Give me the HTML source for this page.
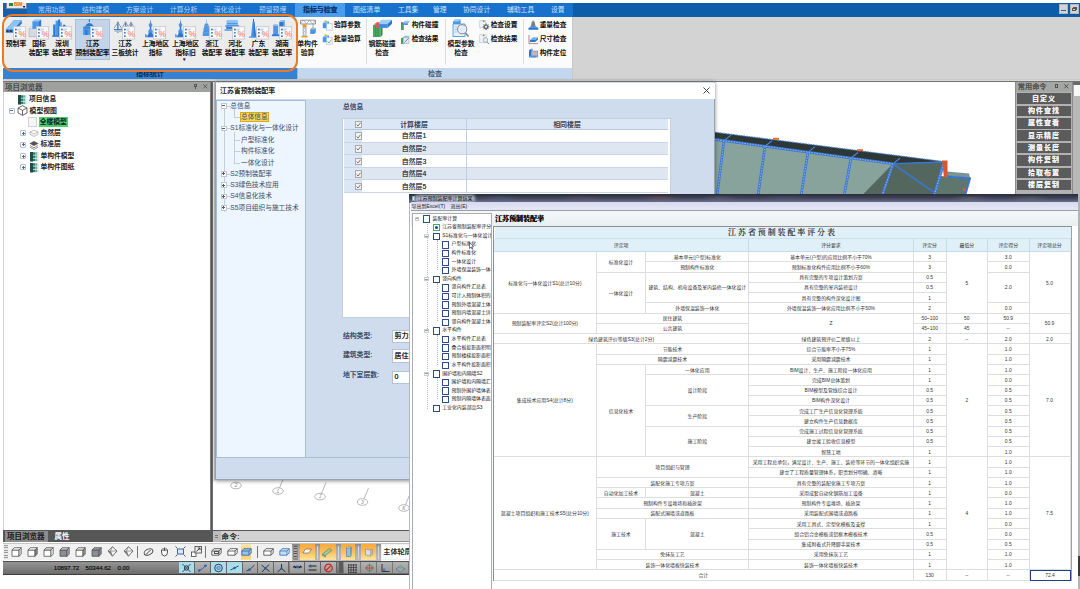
<!DOCTYPE html>
<html lang="zh"><head><meta charset="utf-8"><title>BIM</title><style>
html,body{margin:0;padding:0;background:#fff;}
body{width:1080px;height:589px;position:relative;overflow:hidden;font-family:"Liberation Sans","Noto Sans CJK SC",sans-serif;}
div{position:absolute;box-sizing:border-box;}
.t{white-space:nowrap;line-height:1.2;text-shadow:0 0 .3px currentColor;}
svg{position:absolute;overflow:visible;}
table{border-collapse:collapse;}
.c{border-right:1px solid #dcdee0;border-bottom:1px solid #dcdee0;padding-top:.6px;text-align:center;white-space:nowrap;color:#333;overflow:hidden;background:#fff;}
</style></head><body>
<div style="left:3.3px;top:2.6px;width:1076.7px;height:14.2px;background:#0d5ca9;"></div><div style="left:27px;top:2.6px;width:546px;height:14.2px;background:#1672cc;"></div><div style="left:3.3px;top:2.6px;width:24px;height:14.2px;background:#1060b6;"></div><div style="left:5.9px;top:2.6px;width:20.8px;height:6.9px;background:#e6e6e6;border:1px solid #8a8a8a;border-top:none;"></div><div style="left:8.5px;top:3.1px;width:4.5px;height:3.2px;background:#1f8a4c;"></div><div class="t" style="left:14px;top:2.4px;font-size:4.6px;color:#e8901a;font-weight:bold;">BIM</div><div class="t" style="left:23.3px;top:5.2px;font-size:4px;color:#111;">▾</div><div class="t" style="left:38px;top:6.4px;font-size:6.8px;color:#b6d5f7;text-shadow:none;">常用功能</div><div class="t" style="left:82px;top:6.4px;font-size:6.8px;color:#b6d5f7;text-shadow:none;">结构建模</div><div class="t" style="left:126px;top:6.4px;font-size:6.8px;color:#b6d5f7;text-shadow:none;">方案设计</div><div class="t" style="left:170px;top:6.4px;font-size:6.8px;color:#b6d5f7;text-shadow:none;">计算分析</div><div class="t" style="left:214px;top:6.4px;font-size:6.8px;color:#b6d5f7;text-shadow:none;">深化设计</div><div class="t" style="left:259px;top:6.4px;font-size:6.8px;color:#b6d5f7;text-shadow:none;">预留预埋</div><div style="left:294.5px;top:2.6px;width:50.7px;height:14.2px;background:#4a9deb;"></div><div class="t" style="left:303px;top:6.4px;font-size:6.9px;color:#0e3a72;font-weight:bold;">指标与检查</div><div class="t" style="left:353px;top:6.4px;font-size:6.8px;color:#cfe3fa;text-shadow:none;">图纸清单</div><div class="t" style="left:398px;top:6.4px;font-size:6.8px;color:#cfe3fa;text-shadow:none;">工具集</div><div class="t" style="left:433px;top:6.4px;font-size:6.8px;color:#cfe3fa;text-shadow:none;">管理</div><div class="t" style="left:463px;top:6.4px;font-size:6.8px;color:#cfe3fa;text-shadow:none;">协同设计</div><div class="t" style="left:507px;top:6.4px;font-size:6.8px;color:#cfe3fa;text-shadow:none;">辅助工具</div><div class="t" style="left:551px;top:6.4px;font-size:6.8px;color:#cfe3fa;text-shadow:none;">设置</div><div style="left:1058.6px;top:4.2px;width:9.6px;height:10.2px;background:#d3d3d3;border:1px solid #b4b8bc;"></div><div style="left:1061.2px;top:10.3px;width:4.4px;height:1.2px;background:#555;"></div><div style="left:1069.5px;top:4.2px;width:9.6px;height:10.2px;background:#d3d3d3;border:1px solid #b4b8bc;"></div><div style="left:1072.6px;top:6.6px;width:4.2px;height:3.6px;border:.8px solid #555;border-top:1.4px solid #555;"></div><div style="left:1071.6px;top:7.8px;width:4.2px;height:3.6px;border:.8px solid #555;border-top:1.4px solid #555;background:#d3d3d3;"></div><div style="left:3.3px;top:16.8px;width:1076.7px;height:64px;background:#d3d3d3;"></div><div style="left:3.3px;top:16.8px;width:293.7px;height:51.2px;background:#ececec;"></div><div style="left:297px;top:16.8px;width:275px;height:51.2px;background:#fbfbfb;"></div><div style="left:3.3px;top:68px;width:293.7px;height:10.8px;background:#3482d4;"></div><div style="left:297px;top:68px;width:275.5px;height:10.8px;background:#c3d7ef;border-left:1px solid #9bb8dc;"></div><div style="left:572px;top:16.8px;width:1px;height:63px;background:#c8c8c8;"></div><div class="t" style="left:130px;top:70px;font-size:7px;color:#0b2a55;width:40px;text-align:center;">指标统计</div><div class="t" style="left:415px;top:70px;font-size:7px;color:#4a5a70;width:40px;text-align:center;">检查</div><div style="left:3.3px;top:78.8px;width:1076.7px;height:2.2px;background:linear-gradient(180deg,#c4c4c4,#dedede);"></div><div style="left:3.3px;top:80.8px;width:1076.7px;height:1.2px;background:#727272;"></div><div style="left:75px;top:19px;width:35px;height:41px;background:#c3d4e8;border:1px solid #a9c0dc;"></div><svg style="left:5px;top:18.5px" width="22" height="20.9" viewBox="0 0 20 19"><path d="M0.8 9.5 L8 1.2 H15.2 L15.2 4 L8 12.5 H0.8 Z" fill="#2f78cf"/><path d="M0.8 9.5 L8 1.2 H15.2 L8 9.5 Z" fill="#8cc4f6"/><rect x="1.5" y="10.2" width="1.6" height="1.6" fill="#234"/><rect x="4.5" y="10.2" width="1.6" height="1.6" fill="#234"/><rect x="7.6" y="7" width="11.2" height="11.2" fill="#f7f9fc" stroke="#c2c4c8" stroke-width=".7"/><circle cx="9.9" cy="9.6" r=".85" fill="#2f6fc8"/><circle cx="9.9" cy="12.6" r=".85" fill="#2f6fc8"/><circle cx="9.9" cy="15.6" r=".85" fill="#2f6fc8"/><path d="M11.3 9.2 H14.6 M11.3 10.2 H13.6" stroke="#a4c6f0" stroke-width=".7"/><text x="12.2" y="16.8" font-size="7.8" font-weight="bold" fill="#f4978a" font-family="Liberation Sans,sans-serif">%</text></svg><div class="t" style="left:-14px;top:39.8px;font-size:6.8px;color:#111;width:60px;text-align:center;">预制率</div><svg style="left:28px;top:18.5px" width="22" height="20.9" viewBox="0 0 20 19"><path d="M1 8.5 H9 V16 H1 Z" fill="#d5dae2" stroke="#9aa2ae" stroke-width=".5"/><path d="M1 8.5 L3 6.8 H11 L9 8.5" fill="#eef0f4" stroke="#9aa2ae" stroke-width=".4"/><path d="M4 2 H10 V9 H4 Z" fill="#4a97e8"/><path d="M4 2 L6 0.5 H12 L10 2 Z" fill="#8cc4f6"/><path d="M10 2 L12 0.5 V7.5 L10 9 Z" fill="#2f78cf"/><rect x="7.6" y="7" width="11.2" height="11.2" fill="#f7f9fc" stroke="#c2c4c8" stroke-width=".7"/><circle cx="9.9" cy="9.6" r=".85" fill="#2f6fc8"/><circle cx="9.9" cy="12.6" r=".85" fill="#2f6fc8"/><circle cx="9.9" cy="15.6" r=".85" fill="#2f6fc8"/><path d="M11.3 9.2 H14.6 M11.3 10.2 H13.6" stroke="#a4c6f0" stroke-width=".7"/><text x="12.2" y="16.8" font-size="7.8" font-weight="bold" fill="#f4978a" font-family="Liberation Sans,sans-serif">%</text></svg><div class="t" style="left:9px;top:39.8px;font-size:6.8px;color:#111;width:60px;text-align:center;">国标</div><div class="t" style="left:9px;top:49px;font-size:6.8px;color:#111;width:60px;text-align:center;">装配率</div><svg style="left:51px;top:18.5px" width="22" height="20.9" viewBox="0 0 20 19"><rect x="2" y="5" width="2.2" height="10.5" fill="#2f78cf"/><rect x="4.2" y="1.5" width="2.2" height="14" fill="#4a97e8"/><rect x="6.4" y="0.5" width="2" height="15" fill="#2f78cf"/><rect x="8.4" y="3" width="1.4" height="12.5" fill="#4a97e8"/><rect x="1" y="15" width="10" height="1.2" fill="#2f78cf"/><circle cx="12" cy="6.5" r="1.4" fill="#2f78cf"/><rect x="7.6" y="7" width="11.2" height="11.2" fill="#f7f9fc" stroke="#c2c4c8" stroke-width=".7"/><circle cx="9.9" cy="9.6" r=".85" fill="#2f6fc8"/><circle cx="9.9" cy="12.6" r=".85" fill="#2f6fc8"/><circle cx="9.9" cy="15.6" r=".85" fill="#2f6fc8"/><path d="M11.3 9.2 H14.6 M11.3 10.2 H13.6" stroke="#a4c6f0" stroke-width=".7"/><text x="12.2" y="16.8" font-size="7.8" font-weight="bold" fill="#f4978a" font-family="Liberation Sans,sans-serif">%</text></svg><div class="t" style="left:32px;top:39.8px;font-size:6.8px;color:#111;width:60px;text-align:center;">深圳</div><div class="t" style="left:32px;top:49px;font-size:6.8px;color:#111;width:60px;text-align:center;">装配率</div><svg style="left:81.5px;top:18.5px" width="22" height="20.9" viewBox="0 0 20 19"><path d="M1 14.5 V6.8 H12.5 V14.5 Z" fill="#4a97e8"/><path d="M2.5 6.8 Q6.7 0.5 11 6.8 Z" fill="#2f78cf"/><rect x="6.2" y="0.2" width="1" height="2.6" fill="#2f78cf"/><path d="M3 14.5 V10.5 Q4 9 5 10.5 V14.5 Z" fill="#2f78cf"/><path d="M2.5 8 H11" stroke="#2f78cf" stroke-width=".9"/><rect x="7.6" y="7" width="11.2" height="11.2" fill="#f7f9fc" stroke="#c2c4c8" stroke-width=".7"/><circle cx="9.9" cy="9.6" r=".85" fill="#2f6fc8"/><circle cx="9.9" cy="12.6" r=".85" fill="#2f6fc8"/><circle cx="9.9" cy="15.6" r=".85" fill="#2f6fc8"/><path d="M11.3 9.2 H14.6 M11.3 10.2 H13.6" stroke="#a4c6f0" stroke-width=".7"/><text x="12.2" y="16.8" font-size="7.8" font-weight="bold" fill="#f4978a" font-family="Liberation Sans,sans-serif">%</text></svg><div class="t" style="left:62.5px;top:39.8px;font-size:6.8px;color:#111;width:60px;text-align:center;">江苏</div><div class="t" style="left:62.5px;top:49px;font-size:6.8px;color:#111;width:60px;text-align:center;">预制装配率</div><svg style="left:114px;top:18.5px" width="22" height="20.9" viewBox="0 0 20 19"><path d="M3.5 2.5 V12.5 M10.5 2.5 V12.5 M15.5 3 V10" stroke="#3f7fd0" stroke-width="1.3"/><path d="M0 9.6 H17" stroke="#3f7fd0" stroke-width="1"/><path d="M0 8.5 L3.5 3 L7 8.5 L10.5 3 L13 7 L15.5 3.2 L18 7" stroke="#8a8f9a" stroke-width=".8" fill="none"/><path d="M0.5 11 H9" stroke="#b8bcc4" stroke-width="1.6"/><rect x="7.6" y="7" width="11.2" height="11.2" fill="#f7f9fc" stroke="#c2c4c8" stroke-width=".7"/><circle cx="9.9" cy="9.6" r=".85" fill="#2f6fc8"/><circle cx="9.9" cy="12.6" r=".85" fill="#2f6fc8"/><circle cx="9.9" cy="15.6" r=".85" fill="#2f6fc8"/><path d="M11.3 9.2 H14.6 M11.3 10.2 H13.6" stroke="#a4c6f0" stroke-width=".7"/><text x="12.2" y="16.8" font-size="7.8" font-weight="bold" fill="#f4978a" font-family="Liberation Sans,sans-serif">%</text></svg><div class="t" style="left:95px;top:39.8px;font-size:6.8px;color:#111;width:60px;text-align:center;">江苏</div><div class="t" style="left:95px;top:49px;font-size:6.8px;color:#111;width:60px;text-align:center;">三板统计</div><svg style="left:144.5px;top:18.5px" width="22" height="20.9" viewBox="0 0 20 19"><path d="M5 0 L5.5 4 L4.5 4 Z" fill="#2f78cf"/><circle cx="5" cy="5.4" r="1.7" fill="#4a97e8"/><rect x="4.3" y="6.5" width="1.4" height="4" fill="#2f78cf"/><circle cx="5" cy="11.5" r="2.1" fill="#4a97e8"/><path d="M3.6 12.5 L1.5 16.5 H8.5 L6.4 12.5 Z" fill="#2f78cf"/><path d="M0.3 16.5 V13.5 L1.5 14.5 V16.5 Z M9.7 16.5 V13.5 L8.5 14.5 V16.5 Z" fill="#2f78cf"/><rect x="7.6" y="7" width="11.2" height="11.2" fill="#f7f9fc" stroke="#c2c4c8" stroke-width=".7"/><circle cx="9.9" cy="9.6" r=".85" fill="#2f6fc8"/><circle cx="9.9" cy="12.6" r=".85" fill="#2f6fc8"/><circle cx="9.9" cy="15.6" r=".85" fill="#2f6fc8"/><path d="M11.3 9.2 H14.6 M11.3 10.2 H13.6" stroke="#a4c6f0" stroke-width=".7"/><text x="12.2" y="16.8" font-size="7.8" font-weight="bold" fill="#f4978a" font-family="Liberation Sans,sans-serif">%</text></svg><div class="t" style="left:125.5px;top:39.8px;font-size:6.8px;color:#111;width:60px;text-align:center;">上海地区</div><div class="t" style="left:125.5px;top:49px;font-size:6.8px;color:#111;width:60px;text-align:center;">指标</div><svg style="left:174.5px;top:18.5px" width="22" height="20.9" viewBox="0 0 20 19"><path d="M5 0 L5.5 4 L4.5 4 Z" fill="#2f78cf"/><circle cx="5" cy="5.4" r="1.7" fill="#4a97e8"/><rect x="4.3" y="6.5" width="1.4" height="4" fill="#2f78cf"/><circle cx="5" cy="11.5" r="2.1" fill="#4a97e8"/><path d="M3.6 12.5 L1.5 16.5 H8.5 L6.4 12.5 Z" fill="#2f78cf"/><path d="M0.3 16.5 V13.5 L1.5 14.5 V16.5 Z M9.7 16.5 V13.5 L8.5 14.5 V16.5 Z" fill="#2f78cf"/><rect x="7.6" y="7" width="11.2" height="11.2" fill="#f7f9fc" stroke="#c2c4c8" stroke-width=".7"/><circle cx="9.9" cy="9.6" r=".85" fill="#2f6fc8"/><circle cx="9.9" cy="12.6" r=".85" fill="#2f6fc8"/><circle cx="9.9" cy="15.6" r=".85" fill="#2f6fc8"/><path d="M11.3 9.2 H14.6 M11.3 10.2 H13.6" stroke="#a4c6f0" stroke-width=".7"/><text x="12.2" y="16.8" font-size="7.8" font-weight="bold" fill="#f4978a" font-family="Liberation Sans,sans-serif">%</text></svg><div class="t" style="left:155.5px;top:39.8px;font-size:6.8px;color:#111;width:60px;text-align:center;">上海地区</div><div class="t" style="left:155.5px;top:49px;font-size:6.8px;color:#111;width:60px;text-align:center;">指标旧</div><svg style="left:201px;top:18.5px" width="22" height="20.9" viewBox="0 0 20 19"><path d="M5 0.5 V4" stroke="#8cc4f6" stroke-width=".8"/><path d="M3.6 4 H6.4 L6.8 6 H3.2 Z M3 6.6 H7 L7.4 8.8 H2.6 Z M2.4 9.4 H7.6 L8 11.8 H2 Z M1.8 12.4 H8.2 L8.6 15.5 H1.4 Z" fill="#4a97e8"/><path d="M2.8 6.3 H7.2 M2.2 9.1 H7.8 M1.6 12.1 H8.4" stroke="#2f78cf" stroke-width=".7"/><rect x="7.6" y="7" width="11.2" height="11.2" fill="#f7f9fc" stroke="#c2c4c8" stroke-width=".7"/><circle cx="9.9" cy="9.6" r=".85" fill="#2f6fc8"/><circle cx="9.9" cy="12.6" r=".85" fill="#2f6fc8"/><circle cx="9.9" cy="15.6" r=".85" fill="#2f6fc8"/><path d="M11.3 9.2 H14.6 M11.3 10.2 H13.6" stroke="#a4c6f0" stroke-width=".7"/><text x="12.2" y="16.8" font-size="7.8" font-weight="bold" fill="#f4978a" font-family="Liberation Sans,sans-serif">%</text></svg><div class="t" style="left:182px;top:39.8px;font-size:6.8px;color:#111;width:60px;text-align:center;">浙江</div><div class="t" style="left:182px;top:49px;font-size:6.8px;color:#111;width:60px;text-align:center;">装配率</div><svg style="left:224px;top:18.5px" width="22" height="20.9" viewBox="0 0 20 19"><path d="M1.5 3 L3 1 H12 L13.5 3 Z" fill="#8cc4f6"/><rect x="2.5" y="3.2" width="10" height="1.8" fill="#4a97e8"/><path d="M0.5 7 L2 5.2 H13 L14.5 7 Z" fill="#4a97e8"/><rect x="2" y="7.2" width="8" height="1.8" fill="#2f78cf"/><rect x="0.5" y="9.4" width="9" height="1.3" fill="#4a97e8"/><rect x="7.6" y="7" width="11.2" height="11.2" fill="#f7f9fc" stroke="#c2c4c8" stroke-width=".7"/><circle cx="9.9" cy="9.6" r=".85" fill="#2f6fc8"/><circle cx="9.9" cy="12.6" r=".85" fill="#2f6fc8"/><circle cx="9.9" cy="15.6" r=".85" fill="#2f6fc8"/><path d="M11.3 9.2 H14.6 M11.3 10.2 H13.6" stroke="#a4c6f0" stroke-width=".7"/><text x="12.2" y="16.8" font-size="7.8" font-weight="bold" fill="#f4978a" font-family="Liberation Sans,sans-serif">%</text></svg><div class="t" style="left:205px;top:39.8px;font-size:6.8px;color:#111;width:60px;text-align:center;">河北</div><div class="t" style="left:205px;top:49px;font-size:6.8px;color:#111;width:60px;text-align:center;">装配率</div><svg style="left:247.5px;top:18.5px" width="22" height="20.9" viewBox="0 0 20 19"><path d="M5 0 V3" stroke="#445" stroke-width=".8"/><path d="M4.2 2.5 H5.8 L7.3 16 H9 V17 H1 V16 H2.7 Z" fill="#4a97e8"/><path d="M5 2.5 H5.8 L7.3 16 H5 Z" fill="#2f78cf"/><rect x="7.6" y="7" width="11.2" height="11.2" fill="#f7f9fc" stroke="#c2c4c8" stroke-width=".7"/><circle cx="9.9" cy="9.6" r=".85" fill="#2f6fc8"/><circle cx="9.9" cy="12.6" r=".85" fill="#2f6fc8"/><circle cx="9.9" cy="15.6" r=".85" fill="#2f6fc8"/><path d="M11.3 9.2 H14.6 M11.3 10.2 H13.6" stroke="#a4c6f0" stroke-width=".7"/><text x="12.2" y="16.8" font-size="7.8" font-weight="bold" fill="#f4978a" font-family="Liberation Sans,sans-serif">%</text></svg><div class="t" style="left:228.5px;top:39.8px;font-size:6.8px;color:#111;width:60px;text-align:center;">广东</div><div class="t" style="left:228.5px;top:49px;font-size:6.8px;color:#111;width:60px;text-align:center;">装配率</div><svg style="left:271px;top:18.5px" width="22" height="20.9" viewBox="0 0 20 19"><path d="M2 5.5 H6.5 V14.5 H2 Z" fill="#4a97e8"/><ellipse cx="4.25" cy="5.5" rx="2.25" ry=".9" fill="#8cc4f6"/><path d="M7.5 2.5 H11 V12 H7.5 Z" fill="#2f78cf"/><path d="M7.5 2.5 L9 1 H12.5 L11 2.5 Z" fill="#8cc4f6"/><path d="M11 2.5 L12.5 1 V10.5 L11 12 Z" fill="#4a97e8"/><rect x="0.8" y="14" width="8" height="1.6" fill="#2f78cf"/><rect x="7.6" y="7" width="11.2" height="11.2" fill="#f7f9fc" stroke="#c2c4c8" stroke-width=".7"/><circle cx="9.9" cy="9.6" r=".85" fill="#2f6fc8"/><circle cx="9.9" cy="12.6" r=".85" fill="#2f6fc8"/><circle cx="9.9" cy="15.6" r=".85" fill="#2f6fc8"/><path d="M11.3 9.2 H14.6 M11.3 10.2 H13.6" stroke="#a4c6f0" stroke-width=".7"/><text x="12.2" y="16.8" font-size="7.8" font-weight="bold" fill="#f4978a" font-family="Liberation Sans,sans-serif">%</text></svg><div class="t" style="left:252px;top:39.8px;font-size:6.8px;color:#111;width:60px;text-align:center;">湖南</div><div class="t" style="left:252px;top:49px;font-size:6.8px;color:#111;width:60px;text-align:center;">装配率</div><div class="t" style="left:183px;top:56px;font-size:5px;color:#333;">▾</div><div style="left:2.2px;top:13.8px;width:295.6px;height:58.6px;border:2.7px solid #e97a26;border-radius:11px;"></div><svg style="left:296.5px;top:19px" width="22" height="20" viewBox="0 0 22 20"><path d="M3.5 1.2 H18.5 V5 H3.5 Z" fill="#fafafa" stroke="#6a6e78" stroke-width=".7"/><path d="M3.5 5 L6.5 1.2 L9.5 5 L12.5 1.2 L15.5 5 L18.5 1.2" stroke="#8a8e98" stroke-width=".6" fill="none"/><rect x="5.6" y="5.2" width="4" height="2.8" fill="#f0a020"/><path d="M6.2 8 H9 V17 H6.2 Z" fill="#fafafa" stroke="#7a7e88" stroke-width=".6"/><path d="M6.2 8 L9 11 L6.2 14 L9 17 M9 8 L6.2 11 L9 14" stroke="#9a9ea8" stroke-width=".5" fill="none"/><rect x="4.4" y="17" width="6.4" height="1.4" fill="#e89a20"/><path d="M16 5 V9" stroke="#778" stroke-width=".6"/><path d="M13.2 10.4 L14.6 9 H18.8 V13.6 L17.4 15 H13.2 Z" fill="#4a97e8"/><path d="M13.2 10.4 L14.6 9 H18.8 L17.4 10.4 Z" fill="#8cc4f6"/><rect x="15.2" y="8.2" width="1.6" height="1.4" fill="#e8b030"/></svg><div class="t" style="left:277.5px;top:40.3px;font-size:6.8px;color:#1a1a1a;width:60px;text-align:center;">单构件</div><div class="t" style="left:277.5px;top:49.3px;font-size:6.8px;color:#1a1a1a;width:60px;text-align:center;">验算</div><svg style="left:371px;top:19px" width="22" height="20" viewBox="0 0 22 20"><path d="M2.5 6 H9.5 V18 H2.5 Z" fill="#4aa860"/><path d="M2.5 6 V18 M4.8 6 V18 M7.2 6 V18" stroke="#2f8a48" stroke-width=".7"/><path d="M2.5 6 L4.5 4 H11.5 L9.5 6 Z" fill="#7ac88a"/><path d="M9.5 6 L11.5 4 V16 L9.5 18 Z" fill="#2f8a48"/><path d="M6 5 L10.5 0.8 H21 L16.5 5 Z" fill="#9ccef8"/><path d="M6 5 H16.5 V9 H6 Z" fill="#4a97e8"/><path d="M16.5 5 L21 0.8 V4.8 L16.5 9 Z" fill="#2f78cf"/><path d="M6 6.4 H16.5 M6 7.8 H16.5" stroke="#2f78cf" stroke-width=".5"/><path d="M4.5 4.6 L6.5 2.8 L8.5 4 V8 L6.5 9.4 L4.5 8.2 Z" fill="#e05a5a"/></svg><div class="t" style="left:352px;top:40.3px;font-size:6.8px;color:#1a1a1a;width:60px;text-align:center;">钢筋碰撞</div><div class="t" style="left:352px;top:49.3px;font-size:6.8px;color:#1a1a1a;width:60px;text-align:center;">检查</div><svg style="left:450px;top:19px" width="22" height="20" viewBox="0 0 22 20"><path d="M3 2.4 L5 0.6 H10.6 V6 H3 Z" fill="#4a97e8"/><path d="M3 2.4 L5 0.6 H10.6 L8.6 2.4 Z" fill="#9ccef8"/><path d="M3 5 H15 V17.5 H3 Z" fill="#e8f0f8" stroke="#4a97e8" stroke-width=".9"/><path d="M4.4 8 H7 M4.4 10.5 H7 M4.4 13 H7" stroke="#8cb8e8" stroke-width=".8"/><circle cx="12.2" cy="10.2" r="4.6" fill="#f4f8fc" stroke="#8a8e96" stroke-width="1.1"/><circle cx="12.2" cy="10.2" r="3.3" fill="#dcecf8"/><path d="M15.4 13.8 L18.6 17.6" stroke="#8a8e96" stroke-width="1.7"/></svg><div class="t" style="left:431px;top:40.3px;font-size:6.8px;color:#1a1a1a;width:60px;text-align:center;">模型参数</div><div class="t" style="left:431px;top:49.3px;font-size:6.8px;color:#1a1a1a;width:60px;text-align:center;">检查</div><svg style="left:322.2px;top:19.9px" width="11" height="11" viewBox="0 0 11 11"><path d="M0.8 3.2 L3 1.5 H7 V6.5 L4.8 8.2 H0.8 Z" fill="#4a97e8"/><path d="M0.8 3.2 L3 1.5 H7 L4.8 3.2 Z" fill="#8cc4f6"/><rect x="2.6" y="0.4" width="2" height="1.6" fill="#e8b030"/><rect x="4.6" y="3.6" width="5.6" height="6.6" fill="#f4f7fb" stroke="#b4bcc8" stroke-width=".6"/></svg><div class="t" style="left:333.9px;top:21.099999999999998px;font-size:6.7px;color:#111;">验算参数</div><svg style="left:322.2px;top:33.8px" width="11" height="11" viewBox="0 0 11 11"><path d="M0.8 3.2 L3 1.5 H7 V6.5 L4.8 8.2 H0.8 Z" fill="#4a97e8"/><path d="M0.8 3.2 L3 1.5 H7 L4.8 3.2 Z" fill="#8cc4f6"/><rect x="2.6" y="0.4" width="2" height="1.6" fill="#e8b030"/><rect x="4.6" y="3.6" width="5.6" height="6.6" fill="#f4f7fb" stroke="#b4bcc8" stroke-width=".6"/><path d="M5.6 7.5 L7 9 L9.4 5.6" stroke="#5aa05a" stroke-width=".8" fill="none"/></svg><div class="t" style="left:333.9px;top:35.0px;font-size:6.7px;color:#111;">批量验算</div><svg style="left:400px;top:19.9px" width="11" height="11" viewBox="0 0 11 11"><rect x="1" y="3" width="2.8" height="7" fill="#3fa060"/><rect x="1" y="2.2" width="2.8" height="1.6" fill="#d04a4a"/><path d="M2.5 3.2 L5 0.8 H10.5 L8 3.2 Z" fill="#8cc4f6"/><path d="M2.5 3.2 H8 V5 H2.5 Z" fill="#4a97e8"/></svg><div class="t" style="left:411.7px;top:21.099999999999998px;font-size:6.7px;color:#111;">构件碰撞</div><svg style="left:400px;top:33.8px" width="11" height="11" viewBox="0 0 11 11"><rect x="1" y="4" width="2.2" height="6" fill="#3fa060"/><path d="M2 4 L4.5 1.8 H10 L7.5 4 Z" fill="#8cc4f6"/><rect x="3.4" y="3.4" width="5.6" height="6.2" fill="#e6ebf2" stroke="#9aa6b6" stroke-width=".6"/><path d="M4.5 8.5 L8.5 4.2" stroke="#667" stroke-width=".8"/></svg><div class="t" style="left:411.7px;top:35.0px;font-size:6.7px;color:#111;">检查结果</div><svg style="left:479px;top:19.9px" width="11" height="11" viewBox="0 0 11 11"><rect x="0.8" y="0.8" width="6" height="7" fill="#f2f4f8" stroke="#b4bcc8" stroke-width=".6"/><circle cx="7" cy="6.8" r="2.6" fill="#6a7078"/><circle cx="7" cy="6.8" r="1" fill="#f2f2f2"/><path d="M7 3.4 V10.2 M3.6 6.8 H10.4 M4.6 4.4 L9.4 9.2 M9.4 4.4 L4.6 9.2" stroke="#6a7078" stroke-width=".9"/><circle cx="7" cy="6.8" r="1" fill="#f2f2f2"/><rect x="3.8" y="0.6" width="1.6" height="1.4" fill="#5aa05a"/></svg><div class="t" style="left:490.7px;top:21.099999999999998px;font-size:6.7px;color:#111;">检查设置</div><svg style="left:479px;top:33.8px" width="11" height="11" viewBox="0 0 11 11"><rect x="0.8" y="0.8" width="6.4" height="8" fill="#f2f4f8" stroke="#b4bcc8" stroke-width=".6"/><circle cx="6.4" cy="6" r="2.3" fill="#e4f0fa" stroke="#8a94a4" stroke-width=".7"/><path d="M8 7.8 L10 10.2" stroke="#7a8494" stroke-width="1"/><rect x="3.8" y="0.8" width="1.6" height="1.4" fill="#5aa05a"/></svg><div class="t" style="left:490.7px;top:35.0px;font-size:6.7px;color:#111;">检查结果</div><svg style="left:528px;top:19.9px" width="11" height="11" viewBox="0 0 11 11"><path d="M3.8 1.6 H6.6 L7.8 7.6 H2.6 Z" fill="#7a8088"/><path d="M4.4 0.4 H6 V2 H4.4 Z" fill="#9aa0a8"/><path d="M0.6 8 L2.4 6.6 H8.4 L10.2 8 V9.6 H0.6 Z" fill="#4a97e8"/><path d="M0.6 8 H10.2 V9.6 H0.6 Z" fill="#2f78cf"/></svg><div class="t" style="left:539.7px;top:21.099999999999998px;font-size:6.7px;color:#111;">重量检查</div><svg style="left:528px;top:33.8px" width="11" height="11" viewBox="0 0 11 11"><path d="M1 1 V9.6 H10.2" stroke="#8a5a5a" stroke-width=".7" fill="none"/><path d="M2 6 L5 3.6 H10 L7.2 6 Z" fill="#8cc4f6"/><path d="M2 6 H7.2 L10 3.6 V5.6 L7.2 8 H2 Z" fill="#2f78cf"/><path d="M2 6 L5 3.6 H10 L7.2 6 Z" fill="#6ab0f0"/></svg><div class="t" style="left:539.7px;top:35.0px;font-size:6.7px;color:#111;">尺寸检查</div><svg style="left:528px;top:47.7px" width="11" height="11" viewBox="0 0 11 11"><path d="M1 2.2 L3.2 0.8 V7.6 L1 9.4 Z" fill="#2f78cf"/><path d="M3.2 0.8 H4.6 V3 H3.2 Z" fill="#4a97e8"/><rect x="3.4" y="3" width="6.4" height="6" fill="#c4b4c0" stroke="#7a8494" stroke-width=".6"/><path d="M1 9.4 L3.2 7.6 H9.8 L7.6 9.4 Z" fill="#4a97e8"/></svg><div class="t" style="left:539.7px;top:48.900000000000006px;font-size:6.7px;color:#111;">构件定位</div><div style="left:366px;top:19px;width:1px;height:45px;background:#dcdcdc;"></div><div style="left:445px;top:19px;width:1px;height:45px;background:#dcdcdc;"></div><div style="left:523px;top:19px;width:1px;height:45px;background:#dcdcdc;"></div><div style="left:3.3px;top:81.7px;width:207px;height:10.3px;background:#9fa19f;"></div><div class="t" style="left:5px;top:83px;font-size:7.5px;color:#4a4a4a;">项目浏览器</div><div style="left:194.2px;top:84px;width:2.8px;height:3.4px;border:.8px solid #555;"></div><div style="left:195.3px;top:87.2px;width:0.8px;height:1.4px;background:#555;"></div><svg style="left:202.8px;top:83.8px" width="4.6" height="4.6" viewBox="0 0 5 5"><path d="M0.3 0.3 L4.7 4.7 M4.7 0.3 L0.3 4.7" stroke="#555" stroke-width=".9"/></svg><div style="left:3.3px;top:92px;width:207px;height:437.5px;background:#fff;border-left:1.5px solid #d0d0d0;"></div><div style="left:210.2px;top:82px;width:2.8px;height:448px;background:linear-gradient(90deg,#9a9a9a,#555 45%,#666 80%,#8a8a8a);"></div><svg style="left:18px;top:94.5px" width="8.5" height="9.5" viewBox="0 0 8.5 9.5"><rect x="0" y="0" width="8.5" height="9.5" fill="#eef2f2"/><rect x="3" y="0.3" width="2.2" height="2.4" fill="#2a7a6a"/><rect x="5.2" y="0.3" width="1.8" height="2.4" fill="#6ab0a0"/><rect x="7" y="0.3" width="1.5" height="2.4" fill="#c4e0d8"/><rect x="3" y="3.5" width="2.2" height="2.4" fill="#2a7a6a"/><rect x="5.2" y="3.5" width="1.8" height="2.4" fill="#6ab0a0"/><rect x="7" y="3.5" width="1.5" height="2.4" fill="#c4e0d8"/><rect x="3" y="6.7" width="2.2" height="2.4" fill="#2a7a6a"/><rect x="5.2" y="6.7" width="1.8" height="2.4" fill="#6ab0a0"/><rect x="7" y="6.7" width="1.5" height="2.4" fill="#c4e0d8"/><rect x="0" y="0" width="3" height="9.5" fill="#1c4f48"/></svg><div class="t" style="left:29px;top:95.2px;font-size:6.8px;color:#222;">项目信息</div><div style="left:8.5px;top:107.5px;width:6px;height:6px;border:1px solid #b4bece;background:#fbfcfe;border-radius:1px;"></div><div style="left:10.0px;top:110.0px;width:3px;height:1px;background:#4a6a9e;"></div><svg style="left:17px;top:104.5px" width="11" height="11" viewBox="0 0 11 11"><path d="M5.5 0.7 L10 3 V8 L5.5 10.3 L1 8 V3 Z M1 3 L5.5 5.3 L10 3 M5.5 5.3 V10.3" fill="none" stroke="#444" stroke-width=".8"/></svg><div class="t" style="left:29.6px;top:106.6px;font-size:6.8px;color:#222;">模型视图</div><div style="left:28px;top:117px;width:9px;height:10px;background:#f6f6f6;border:1px solid #d4d4d4;"></div><div style="left:38.5px;top:117px;width:29.5px;height:10px;background:#4fd263;"></div><div class="t" style="left:39.7px;top:117.8px;font-size:6.8px;color:#123;">全楼模型</div><div style="left:20px;top:130.2px;width:6px;height:6px;border:1px solid #b4bece;background:#fbfcfe;border-radius:1px;"></div><div style="left:21.5px;top:132.7px;width:3px;height:1px;background:#4a6a9e;"></div><div style="left:22.5px;top:131.7px;width:1px;height:3px;background:#4a6a9e;"></div><svg style="left:29px;top:128.2px" width="10" height="10" viewBox="0 0 10 10"><path d="M5 2 L9 4 L5 6 L1 4 Z M1 4 V6.5 L5 8.5 L9 6.5 V4" fill="#f4f4f4" stroke="#aaa" stroke-width=".7"/></svg><div class="t" style="left:40.4px;top:129.1px;font-size:6.8px;color:#222;">自然层</div><div style="left:20px;top:141.5px;width:6px;height:6px;border:1px solid #b4bece;background:#fbfcfe;border-radius:1px;"></div><div style="left:21.5px;top:144.0px;width:3px;height:1px;background:#4a6a9e;"></div><div style="left:22.5px;top:143.0px;width:1px;height:3px;background:#4a6a9e;"></div><svg style="left:29px;top:139.5px" width="10" height="10" viewBox="0 0 10 10"><path d="M5 1 L9.5 3.5 L5 6 L0.5 3.5 Z" fill="#555"/><path d="M1 5.5 L5 7.8 L9 5.5 M1 7.2 L5 9.5 L9 7.2" stroke="#888" stroke-width=".9" fill="none"/></svg><div class="t" style="left:40.4px;top:140.4px;font-size:6.8px;color:#222;">标准层</div><div style="left:20px;top:153px;width:6px;height:6px;border:1px solid #b4bece;background:#fbfcfe;border-radius:1px;"></div><div style="left:21.5px;top:155.5px;width:3px;height:1px;background:#4a6a9e;"></div><div style="left:22.5px;top:154.5px;width:1px;height:3px;background:#4a6a9e;"></div><svg style="left:29.5px;top:151.5px" width="8.5" height="9.5" viewBox="0 0 8.5 9.5"><rect x="0" y="0" width="8.5" height="9.5" fill="#eef2f2"/><rect x="3" y="0.3" width="2.2" height="2.4" fill="#2a7a6a"/><rect x="5.2" y="0.3" width="1.8" height="2.4" fill="#6ab0a0"/><rect x="7" y="0.3" width="1.5" height="2.4" fill="#c4e0d8"/><rect x="3" y="3.5" width="2.2" height="2.4" fill="#2a7a6a"/><rect x="5.2" y="3.5" width="1.8" height="2.4" fill="#6ab0a0"/><rect x="7" y="3.5" width="1.5" height="2.4" fill="#c4e0d8"/><rect x="3" y="6.7" width="2.2" height="2.4" fill="#2a7a6a"/><rect x="5.2" y="6.7" width="1.8" height="2.4" fill="#6ab0a0"/><rect x="7" y="6.7" width="1.5" height="2.4" fill="#c4e0d8"/><rect x="0" y="0" width="3" height="9.5" fill="#1c4f48"/></svg><div class="t" style="left:40.4px;top:151.9px;font-size:6.8px;color:#222;">单构件模型</div><div style="left:20px;top:164.2px;width:6px;height:6px;border:1px solid #b4bece;background:#fbfcfe;border-radius:1px;"></div><div style="left:21.5px;top:166.7px;width:3px;height:1px;background:#4a6a9e;"></div><div style="left:22.5px;top:165.7px;width:1px;height:3px;background:#4a6a9e;"></div><svg style="left:29.5px;top:162.7px" width="8.5" height="9.5" viewBox="0 0 8.5 9.5"><rect x="0" y="0" width="8.5" height="9.5" fill="#eef2f2"/><rect x="3" y="0.3" width="2.2" height="2.4" fill="#2a7a6a"/><rect x="5.2" y="0.3" width="1.8" height="2.4" fill="#6ab0a0"/><rect x="7" y="0.3" width="1.5" height="2.4" fill="#c4e0d8"/><rect x="3" y="3.5" width="2.2" height="2.4" fill="#2a7a6a"/><rect x="5.2" y="3.5" width="1.8" height="2.4" fill="#6ab0a0"/><rect x="7" y="3.5" width="1.5" height="2.4" fill="#c4e0d8"/><rect x="3" y="6.7" width="2.2" height="2.4" fill="#2a7a6a"/><rect x="5.2" y="6.7" width="1.8" height="2.4" fill="#6ab0a0"/><rect x="7" y="6.7" width="1.5" height="2.4" fill="#c4e0d8"/><rect x="0" y="0" width="3" height="9.5" fill="#1c4f48"/></svg><div class="t" style="left:40.4px;top:163.1px;font-size:6.8px;color:#222;">单构件图纸</div><div style="left:3px;top:529.5px;width:209.5px;height:12.5px;background:#575757;"></div><div style="left:5px;top:530.5px;width:42.5px;height:11px;background:#8c8c8c;"></div><div class="t" style="left:7px;top:531.5px;font-size:7.5px;color:#1a1a1a;">项目浏览器</div><div class="t" style="left:54.5px;top:531.5px;font-size:7.5px;color:#fff;">属性</div><div style="left:212.5px;top:82px;width:803px;height:448px;background:#fff;"></div><svg style="left:0;top:0" width="1080" height="589" viewBox="0 0 1080 589"><polygon points="715,139.4 893,163.8 861,196 715,196" fill="#88a39b"/><polygon points="893,163.5 944,162 935,196 861,196" fill="#53675f"/><polygon points="715,132.2 944,161.6 893,163.8 715,139.4" fill="#2d3836"/><polygon points="947,171.5 969,173.5 970,178 947,176" fill="#7c9389"/><polygon points="940,176 970,178 965,196 934,196" fill="#5f766d"/><path d="M715 132.2 L944 161.6" stroke="#4a86d8" stroke-width="1.1" stroke-dasharray="1.6 1" fill="none"/><path d="M715 139.4 L893 163.8" stroke="#3a76d2" stroke-width="2.6" fill="none"/><path d="M715 139.4 L893 163.8" stroke="#8fb4ea" stroke-width="1.09" stroke-dasharray="1.4 1.3" fill="none"/><path d="M893 163.8 L944 162" stroke="#3a76d2" stroke-width="1.6" fill="none"/><path d="M724 140.6 L717 196" stroke="#3a76d2" stroke-width="2.6" fill="none"/><path d="M724 140.6 L717 196" stroke="#8fb4ea" stroke-width="1.09" stroke-dasharray="1.4 1.3" fill="none"/><path d="M724 140.6 L731 135.1" stroke="#4a86d8" stroke-width="1.1" fill="none"/><path d="M765 146.2 L758 196" stroke="#3a76d2" stroke-width="2.6" fill="none"/><path d="M765 146.2 L758 196" stroke="#8fb4ea" stroke-width="1.09" stroke-dasharray="1.4 1.3" fill="none"/><path d="M765 146.2 L772 140.8" stroke="#4a86d8" stroke-width="1.1" fill="none"/><path d="M808 152.1 L801 196" stroke="#3a76d2" stroke-width="2.6" fill="none"/><path d="M808 152.1 L801 196" stroke="#8fb4ea" stroke-width="1.09" stroke-dasharray="1.4 1.3" fill="none"/><path d="M808 152.1 L815 146.6" stroke="#4a86d8" stroke-width="1.1" fill="none"/><path d="M851 158.0 L844 196" stroke="#3a76d2" stroke-width="2.6" fill="none"/><path d="M851 158.0 L844 196" stroke="#8fb4ea" stroke-width="1.09" stroke-dasharray="1.4 1.3" fill="none"/><path d="M851 158.0 L858 152.5" stroke="#4a86d8" stroke-width="1.1" fill="none"/><path d="M893 163.8 L882 196" stroke="#3a76d2" stroke-width="2.6" fill="none"/><path d="M893 163.8 L882 196" stroke="#8fb4ea" stroke-width="1.09" stroke-dasharray="1.4 1.3" fill="none"/><path d="M893 163.8 L900 158.3" stroke="#4a86d8" stroke-width="1.1" fill="none"/><path d="M893 163.8 L935 193" stroke="#3a76d2" stroke-width="1.6" fill="none"/><path d="M944 162 L934 196" stroke="#3a76d2" stroke-width="2.8" fill="none"/><path d="M944 162 L934 196" stroke="#8fb4ea" stroke-width="1.18" stroke-dasharray="1.4 1.3" fill="none"/><path d="M947 176.5 L970 178.5 L965 196" stroke="#3a76d2" stroke-width="2" fill="none"/><path d="M950 174 L968 175.6" stroke="#6a9ae0" stroke-width=".8" stroke-dasharray="2 1.2" fill="none"/><polygon points="942,160.5 947.5,160.5 947.5,176 944,178" fill="#d9562e"/><rect x="773" y="137.8" width="6" height="2" fill="#e0683a"/><rect x="857" y="149.2" width="6" height="2" fill="#e0683a"/><rect x="963" y="188" width="3" height="3" fill="#d9562e"/><ellipse cx="236" cy="485.5" rx="5.3" ry="3.3" fill="#fff" stroke="#9a9a9a" stroke-width=".7"/><text x="236" y="487.3" font-size="5" text-anchor="middle" fill="#888" font-family="Liberation Sans,sans-serif" font-style="italic">2</text><ellipse cx="278" cy="491" rx="5.3" ry="3.3" fill="#fff" stroke="#9a9a9a" stroke-width=".7"/><text x="278" y="492.8" font-size="5" text-anchor="middle" fill="#888" font-family="Liberation Sans,sans-serif" font-style="italic">1</text><path d="M279.5 487.8 L284 477" stroke="#999" stroke-width=".7"/><ellipse cx="320" cy="496.6" rx="5.3" ry="3.3" fill="#fff" stroke="#9a9a9a" stroke-width=".7"/><text x="320" y="498.40000000000003" font-size="5" text-anchor="middle" fill="#888" font-family="Liberation Sans,sans-serif" font-style="italic">J</text><path d="M321.5 493.40000000000003 L326 482.6" stroke="#999" stroke-width=".7"/><ellipse cx="362.5" cy="502" rx="5.3" ry="3.3" fill="#fff" stroke="#9a9a9a" stroke-width=".7"/><text x="362.5" y="503.8" font-size="5" text-anchor="middle" fill="#888" font-family="Liberation Sans,sans-serif" font-style="italic">3</text><path d="M364.0 498.8 L368.5 488" stroke="#999" stroke-width=".7"/><ellipse cx="404" cy="508" rx="5.3" ry="3.3" fill="#fff" stroke="#9a9a9a" stroke-width=".7"/><text x="404" y="509.8" font-size="5" text-anchor="middle" fill="#888" font-family="Liberation Sans,sans-serif" font-style="italic">K</text><path d="M405.5 504.8 L410 494" stroke="#999" stroke-width=".7"/></svg><div style="left:1015px;top:81.7px;width:57.5px;height:115px;background:#b2b2b2;border-left:1px solid #8c8c8c;border-right:1px solid #8c8c8c;"></div><div style="left:1016px;top:81.7px;width:55.5px;height:10.8px;background:#a4a6a4;"></div><div class="t" style="left:1017.8px;top:83.2px;font-size:7.2px;color:#4a4a4a;">常用命令</div><div style="left:1055.4px;top:84.4px;width:2.8px;height:3.6px;border:.8px solid #555;"></div><svg style="left:1064.2px;top:84.2px" width="4.6" height="4.6" viewBox="0 0 5 5"><path d="M0.3 0.3 L4.7 4.7 M4.7 0.3 L0.3 4.7" stroke="#444" stroke-width=".9"/></svg><div style="left:1017px;top:93.4px;width:54px;height:10.6px;background:#5b5b5b;"></div><div class="t" style="left:1017px;top:94.60000000000001px;font-size:7px;color:#f4f4f4;width:54px;text-align:center;letter-spacing:1px;font-weight:bold;">自定义</div><div style="left:1017px;top:105.75px;width:54px;height:10.6px;background:#5b5b5b;"></div><div class="t" style="left:1017px;top:106.95px;font-size:7px;color:#f4f4f4;width:54px;text-align:center;letter-spacing:1px;font-weight:bold;">构件查找</div><div style="left:1017px;top:118.10000000000001px;width:54px;height:10.6px;background:#5b5b5b;"></div><div class="t" style="left:1017px;top:119.30000000000001px;font-size:7px;color:#f4f4f4;width:54px;text-align:center;letter-spacing:1px;font-weight:bold;">属性查看</div><div style="left:1017px;top:130.45px;width:54px;height:10.6px;background:#5b5b5b;"></div><div class="t" style="left:1017px;top:131.64999999999998px;font-size:7px;color:#f4f4f4;width:54px;text-align:center;letter-spacing:1px;font-weight:bold;">显示精度</div><div style="left:1017px;top:142.8px;width:54px;height:10.6px;background:#5b5b5b;"></div><div class="t" style="left:1017px;top:144.0px;font-size:7px;color:#f4f4f4;width:54px;text-align:center;letter-spacing:1px;font-weight:bold;">测量长度</div><div style="left:1017px;top:155.15px;width:54px;height:10.6px;background:#5b5b5b;"></div><div class="t" style="left:1017px;top:156.35px;font-size:7px;color:#f4f4f4;width:54px;text-align:center;letter-spacing:1px;font-weight:bold;">构件复制</div><div style="left:1017px;top:167.5px;width:54px;height:10.6px;background:#5b5b5b;"></div><div class="t" style="left:1017px;top:168.7px;font-size:7px;color:#f4f4f4;width:54px;text-align:center;letter-spacing:1px;font-weight:bold;">拾取布置</div><div style="left:1017px;top:179.85000000000002px;width:54px;height:10.6px;background:#5b5b5b;"></div><div class="t" style="left:1017px;top:181.05px;font-size:7px;color:#f4f4f4;width:54px;text-align:center;letter-spacing:1px;font-weight:bold;">楼层复制</div><div style="left:1072.5px;top:81.7px;width:7.5px;height:115px;background:#b8b8b8;"></div><div style="left:1073px;top:81.7px;width:7px;height:3px;background:#6a6a6a;"></div><div style="left:1073.3px;top:84.6px;width:6.7px;height:11px;background:#f8f8f8;border-left:1px solid #aaa;"></div><div style="left:212.9px;top:82px;width:2.6px;height:399px;background:linear-gradient(90deg,#fdfdfd,#e4e4e4 60%,#bcbcbc);"></div><div style="left:215.3px;top:81.2px;width:500px;height:399.1px;background:#cfdcee;box-shadow:0 1px 4px rgba(0,0,0,.45);border:1px solid #97a1b0;border-top:1.5px solid #6e6e6e;"></div><div style="left:216px;top:82.6px;width:498.6px;height:16.8px;background:#fff;"></div><div class="t" style="left:220px;top:86.8px;font-size:6.9px;color:#222;">江苏省预制装配率</div><svg style="left:702.5px;top:86.5px" width="7" height="7" viewBox="0 0 7 7"><path d="M0.5 0.5 L6.5 6.5 M6.5 0.5 L0.5 6.5" stroke="#333" stroke-width=".9"/></svg><div style="left:216px;top:99.5px;width:89.5px;height:358px;background:#edf5fe;border:1px solid #a4bad6;"></div><div style="left:216px;top:457.3px;width:498.5px;height:1px;background:#a9bdd8;"></div><div style="left:223.7px;top:108px;width:1px;height:104px;border-left:1px solid #c4ccd8;"></div><div style="left:233.5px;top:109px;width:1px;height:8px;border-left:1px solid #c4ccd8;"></div><div style="left:233.5px;top:132px;width:1px;height:31.5px;border-left:1px solid #c4ccd8;"></div><div style="left:221px;top:103.1px;width:5.5px;height:5.5px;border:1px solid #bcc6d4;background:#fff;"></div><div style="left:222.3px;top:105.39999999999999px;width:3px;height:1px;background:#556;"></div><div style="left:227px;top:105.8px;width:3.5px;height:1px;border-top:1px solid #c4ccd8;"></div><div class="t" style="left:230.3px;top:101.89999999999999px;font-size:6.7px;color:#404c60;text-shadow:none;">总信息</div><div style="left:233.5px;top:117.3px;width:6px;height:1px;border-top:1px solid #c4ccd8;"></div><div style="left:239.5px;top:111.89999999999999px;width:29.5px;height:10.4px;background:#f9d65b;border:1px solid #d8a820;"></div><div class="t" style="left:241px;top:113.1px;font-size:6.7px;color:#404c60;text-shadow:none;">总体信息</div><div style="left:221px;top:125.5px;width:5.5px;height:5.5px;border:1px solid #bcc6d4;background:#fff;"></div><div style="left:222.3px;top:127.8px;width:3px;height:1px;background:#556;"></div><div style="left:227px;top:128.2px;width:3.5px;height:1px;border-top:1px solid #c4ccd8;"></div><div class="t" style="left:230.3px;top:124.3px;font-size:6.7px;color:#404c60;text-shadow:none;">S1标准化与一体化设计</div><div style="left:233.5px;top:140.2px;width:6px;height:1px;border-top:1px solid #c4ccd8;"></div><div class="t" style="left:241px;top:136.0px;font-size:6.7px;color:#404c60;text-shadow:none;">户型标准化</div><div style="left:233.5px;top:151.4px;width:6px;height:1px;border-top:1px solid #c4ccd8;"></div><div class="t" style="left:241px;top:147.20000000000002px;font-size:6.7px;color:#404c60;text-shadow:none;">构件标准化</div><div style="left:233.5px;top:162.8px;width:6px;height:1px;border-top:1px solid #c4ccd8;"></div><div class="t" style="left:241px;top:158.60000000000002px;font-size:6.7px;color:#404c60;text-shadow:none;">一体化设计</div><div style="left:221px;top:171px;width:5.5px;height:5.5px;border:1px solid #bcc6d4;background:#fff;"></div><div style="left:222.3px;top:173.3px;width:3px;height:1px;background:#556;"></div><div style="left:223.3px;top:172.3px;width:1px;height:3px;background:#556;"></div><div style="left:227px;top:173.7px;width:3.5px;height:1px;border-top:1px solid #c4ccd8;"></div><div class="t" style="left:230.3px;top:169.8px;font-size:6.7px;color:#404c60;text-shadow:none;">S2预制装配率</div><div style="left:221px;top:182.2px;width:5.5px;height:5.5px;border:1px solid #bcc6d4;background:#fff;"></div><div style="left:222.3px;top:184.5px;width:3px;height:1px;background:#556;"></div><div style="left:223.3px;top:183.5px;width:1px;height:3px;background:#556;"></div><div style="left:227px;top:184.89999999999998px;width:3.5px;height:1px;border-top:1px solid #c4ccd8;"></div><div class="t" style="left:230.3px;top:181.0px;font-size:6.7px;color:#404c60;text-shadow:none;">S3绿色技术应用</div><div style="left:221px;top:193.6px;width:5.5px;height:5.5px;border:1px solid #bcc6d4;background:#fff;"></div><div style="left:222.3px;top:195.9px;width:3px;height:1px;background:#556;"></div><div style="left:223.3px;top:194.9px;width:1px;height:3px;background:#556;"></div><div style="left:227px;top:196.29999999999998px;width:3.5px;height:1px;border-top:1px solid #c4ccd8;"></div><div class="t" style="left:230.3px;top:192.4px;font-size:6.7px;color:#404c60;text-shadow:none;">S4信息化技术</div><div style="left:221px;top:205px;width:5.5px;height:5.5px;border:1px solid #bcc6d4;background:#fff;"></div><div style="left:222.3px;top:207.3px;width:3px;height:1px;background:#556;"></div><div style="left:223.3px;top:206.3px;width:1px;height:3px;background:#556;"></div><div style="left:227px;top:207.7px;width:3.5px;height:1px;border-top:1px solid #c4ccd8;"></div><div class="t" style="left:230.3px;top:203.8px;font-size:6.7px;color:#404c60;text-shadow:none;">S5项目组织与施工技术</div><div class="t" style="left:343px;top:103.4px;font-size:6.8px;color:#3c4c66;">总信息</div><div style="left:342px;top:117.8px;width:328.5px;height:200.7px;background:#fff;border:1px solid #c2cfdf;"></div><div style="left:344px;top:119px;width:324px;height:10.7px;background:#dbe7f5;border-bottom:1px solid #b9c8dd;"></div><div style="left:344px;top:129.7px;width:324px;height:12.900000000000006px;background:#ffffff;border-bottom:1px solid #c9d5e6;"></div><div style="left:344px;top:129.7px;width:18px;height:12.900000000000006px;background:#dbe7f5;border-bottom:1px solid #c9d5e6;"></div><div style="left:354.5px;top:132.29999999999998px;width:7.5px;height:7.5px;background:#f2f2f2;border:1px solid #a8a8a8;"></div><svg style="left:355.7px;top:133.49999999999997px" width="5" height="5" viewBox="0 0 5 5"><path d="M0.6 2.6 L2 4 L4.5 0.8" stroke="#666" stroke-width=".9" fill="none"/></svg><div class="t" style="left:362px;top:132.2px;font-size:6.9px;color:#3a4658;width:104px;text-align:center;">自然层1</div><div style="left:344px;top:142.6px;width:324px;height:12.599999999999994px;background:#dde6f1;border-bottom:1px solid #c9d5e6;"></div><div style="left:344px;top:142.6px;width:18px;height:12.599999999999994px;background:#dbe7f5;border-bottom:1px solid #c9d5e6;"></div><div style="left:354.5px;top:145.2px;width:7.5px;height:7.5px;background:#f2f2f2;border:1px solid #a8a8a8;"></div><svg style="left:355.7px;top:146.39999999999998px" width="5" height="5" viewBox="0 0 5 5"><path d="M0.6 2.6 L2 4 L4.5 0.8" stroke="#666" stroke-width=".9" fill="none"/></svg><div class="t" style="left:362px;top:145.1px;font-size:6.9px;color:#3a4658;width:104px;text-align:center;">自然层2</div><div style="left:344px;top:155.2px;width:324px;height:12.5px;background:#ffffff;border-bottom:1px solid #c9d5e6;"></div><div style="left:344px;top:155.2px;width:18px;height:12.5px;background:#dbe7f5;border-bottom:1px solid #c9d5e6;"></div><div style="left:354.5px;top:157.79999999999998px;width:7.5px;height:7.5px;background:#f2f2f2;border:1px solid #a8a8a8;"></div><svg style="left:355.7px;top:158.99999999999997px" width="5" height="5" viewBox="0 0 5 5"><path d="M0.6 2.6 L2 4 L4.5 0.8" stroke="#666" stroke-width=".9" fill="none"/></svg><div class="t" style="left:362px;top:157.7px;font-size:6.9px;color:#3a4658;width:104px;text-align:center;">自然层3</div><div style="left:344px;top:167.7px;width:324px;height:12.600000000000023px;background:#dde6f1;border-bottom:1px solid #c9d5e6;"></div><div style="left:344px;top:167.7px;width:18px;height:12.600000000000023px;background:#dbe7f5;border-bottom:1px solid #c9d5e6;"></div><div style="left:354.5px;top:170.29999999999998px;width:7.5px;height:7.5px;background:#f2f2f2;border:1px solid #a8a8a8;"></div><svg style="left:355.7px;top:171.49999999999997px" width="5" height="5" viewBox="0 0 5 5"><path d="M0.6 2.6 L2 4 L4.5 0.8" stroke="#666" stroke-width=".9" fill="none"/></svg><div class="t" style="left:362px;top:170.2px;font-size:6.9px;color:#3a4658;width:104px;text-align:center;">自然层4</div><div style="left:344px;top:180.3px;width:324px;height:12.5px;background:#ffffff;border-bottom:1px solid #c9d5e6;"></div><div style="left:344px;top:180.3px;width:18px;height:12.5px;background:#dbe7f5;border-bottom:1px solid #c9d5e6;"></div><div style="left:354.5px;top:182.9px;width:7.5px;height:7.5px;background:#f2f2f2;border:1px solid #a8a8a8;"></div><svg style="left:355.7px;top:184.1px" width="5" height="5" viewBox="0 0 5 5"><path d="M0.6 2.6 L2 4 L4.5 0.8" stroke="#666" stroke-width=".9" fill="none"/></svg><div class="t" style="left:362px;top:182.8px;font-size:6.9px;color:#3a4658;width:104px;text-align:center;">自然层5</div><div style="left:354.5px;top:120.7px;width:7.5px;height:7.5px;background:#f2f2f2;border:1px solid #a8a8a8;"></div><svg style="left:355.7px;top:121.9px" width="5" height="5" viewBox="0 0 5 5"><path d="M0.6 2.6 L2 4 L4.5 0.8" stroke="#666" stroke-width=".9" fill="none"/></svg><div class="t" style="left:362px;top:120.6px;font-size:6.9px;color:#3a4658;width:104px;text-align:center;">计算楼层</div><div class="t" style="left:466.5px;top:120.6px;font-size:6.9px;color:#3a4658;width:201px;text-align:center;">相同楼层</div><div style="left:466px;top:119px;width:1px;height:74px;background:#c2cfe2;"></div><div class="t" style="left:343px;top:332px;font-size:6.8px;color:#3c4c66;">结构类型:</div><div style="left:392px;top:330px;width:60px;height:13px;background:#fff;border:1px solid #b4c2d6;"></div><div class="t" style="left:394.5px;top:332.3px;font-size:7px;color:#222;">剪力墙结构</div><div class="t" style="left:343px;top:351px;font-size:6.8px;color:#3c4c66;">建筑类型:</div><div style="left:392px;top:349px;width:60px;height:13.5px;background:#fff;border:1px solid #b4c2d6;"></div><div class="t" style="left:394.5px;top:351.5px;font-size:7px;color:#222;">居住建筑</div><div class="t" style="left:343px;top:371.2px;font-size:6.8px;color:#3c4c66;">地下室层数:</div><div style="left:392px;top:370.5px;width:60px;height:13.5px;background:#fff;border:1px solid #b4c2d6;"></div><div class="t" style="left:394.5px;top:373px;font-size:7px;color:#222;">0</div><div style="left:212.5px;top:529.5px;width:197px;height:12.8px;background:#d2d2d2;border-top:1.3px solid #585858;border-bottom:1px solid #8c8c8c;"></div><div style="left:213px;top:531px;width:7.5px;height:10.5px;background:#bcbcbc;"></div><div style="left:215px;top:534.5px;width:3px;height:0.8px;background:#777;"></div><div style="left:215px;top:536.5px;width:3px;height:0.8px;background:#777;"></div><div class="t" style="left:221.5px;top:532.5px;font-size:7.3px;color:#222;letter-spacing:.6px;">命令:</div><div style="left:3px;top:543.3px;width:406px;height:17.2px;background:#f1f1f1;border-top:1px solid #c4c4c4;"></div><div style="left:4px;top:545px;width:4px;height:14px;background:repeating-linear-gradient(180deg,#999 0,#999 1px,#e8e8e8 1px,#e8e8e8 2.5px);"></div><svg style="left:11px;top:546.5px" width="11" height="10" viewBox="0 0 11 10"><path d="M1 3 H8 V9.3 H1 Z" fill="#fff" stroke="#555" stroke-width=".8"/><path d="M1 3 L3.2 0.7 H10.2 L8 3 Z" fill="#fff" stroke="#555" stroke-width=".8"/><path d="M8 3 L10.2 0.7 V7 L8 9.3 Z" fill="#e8e8e8" stroke="#555" stroke-width=".8"/></svg><svg style="left:27px;top:546.5px" width="11" height="10" viewBox="0 0 11 10"><path d="M1 3 H8 V9.3 H1 Z" fill="#fff" stroke="#555" stroke-width=".8"/><path d="M1 3 L3.2 0.7 H10.2 L8 3 Z" fill="#fff" stroke="#555" stroke-width=".8"/><path d="M8 3 L10.2 0.7 V7 L8 9.3 Z" fill="#888" stroke="#555" stroke-width=".8"/></svg><svg style="left:43px;top:546.5px" width="11" height="10" viewBox="0 0 11 10"><path d="M1 3 H8 V9.3 H1 Z" fill="#fff" stroke="#555" stroke-width=".8"/><path d="M1 3 L3.2 0.7 H10.2 L8 3 Z" fill="#ddd" stroke="#555" stroke-width=".8"/><path d="M8 3 L10.2 0.7 V7 L8 9.3 Z" fill="#fff" stroke="#555" stroke-width=".8"/></svg><svg style="left:59px;top:546.5px" width="11" height="10" viewBox="0 0 11 10"><path d="M1 3 H8 V9.3 H1 Z" fill="#8a8e94" stroke="#555" stroke-width=".8"/><path d="M1 3 L3.2 0.7 H10.2 L8 3 Z" fill="#ccc" stroke="#555" stroke-width=".8"/><path d="M8 3 L10.2 0.7 V7 L8 9.3 Z" fill="#aaa" stroke="#555" stroke-width=".8"/></svg><svg style="left:75px;top:546.5px" width="11" height="10" viewBox="0 0 11 10"><path d="M1 3 H8 V9.3 H1 Z" fill="#fff" stroke="#555" stroke-width=".8"/><path d="M1 3 L3.2 0.7 H10.2 L8 3 Z" fill="#eee" stroke="#555" stroke-width=".8"/><path d="M8 3 L10.2 0.7 V7 L8 9.3 Z" fill="#999" stroke="#555" stroke-width=".8"/></svg><svg style="left:91px;top:546.5px" width="11" height="10" viewBox="0 0 11 10"><path d="M1 3 H8 V9.3 H1 Z" fill="#8a8e94" stroke="#555" stroke-width=".8"/><path d="M1 3 L3.2 0.7 H10.2 L8 3 Z" fill="#9a9ea4" stroke="#555" stroke-width=".8"/><path d="M8 3 L10.2 0.7 V7 L8 9.3 Z" fill="#8a8e94" stroke="#555" stroke-width=".8"/></svg><svg style="left:106.5px;top:546px" width="11" height="11" viewBox="0 0 11 11"><path d="M5.5 0.8 L10 5 L5.5 10.2 L1 5 Z" fill="#f4f4f4" stroke="#555" stroke-width=".8"/><path d="M5.5 10.2 L3.5 5 L5.5 0.8 M3.5 5 L10 5" stroke="#666" stroke-width=".6" fill="none"/><path d="M1 5 L3.5 5 L5.5 10.2 Z" fill="#777"/></svg><svg style="left:122.5px;top:546px" width="11" height="11" viewBox="0 0 11 11"><path d="M5.5 0.8 L10 5 L5.5 10.2 L1 5 Z" fill="#f4f4f4" stroke="#555" stroke-width=".8"/><path d="M5.5 10.2 L3.5 5 L5.5 0.8 M3.5 5 L10 5" stroke="#666" stroke-width=".6" fill="none"/><path d="M1 5 L3.5 5 L5.5 10.2 Z" fill="#777"/></svg><div style="left:137px;top:546px;width:1px;height:12px;background:#777;"></div><svg style="left:142.5px;top:546.5px" width="11" height="10" viewBox="0 0 11 10"><ellipse cx="5.5" cy="5" rx="4.6" ry="2.8" fill="none" stroke="#444" stroke-width=".9" transform="rotate(-25 5.5 5)"/><path d="M3 7.5 L8 2.5" stroke="#444" stroke-width="1"/></svg><svg style="left:158.5px;top:546px" width="11" height="11" viewBox="0 0 11 11"><path d="M2.5 6 V3.5 M4 5 V2 M5.5 5 V1.5 M7 5 V2 M8.5 6 V3.5 M2.5 6 Q2.5 10 5.5 10 Q8.5 10 8.5 6" fill="#fff" stroke="#444" stroke-width=".9"/></svg><svg style="left:174.5px;top:546px" width="11" height="11" viewBox="0 0 11 11"><path d="M2.5 3 H8.5 V8 H2.5 Z" fill="#dfe9fa" stroke="#3a62b8" stroke-width="1"/><path d="M0.5 0.5 L2.5 2.5 M10.5 0.5 L8.5 2.5 M0.5 10.5 L2.5 8.5 M10.5 10.5 L8.5 8.5" stroke="#444" stroke-width=".9"/></svg><svg style="left:190.5px;top:546px" width="11" height="11" viewBox="0 0 11 11"><rect x="0.5" y="6" width="4.5" height="4.5" fill="#fff" stroke="#444" stroke-width=".8"/><rect x="4" y="0.5" width="6.5" height="6.5" fill="#eee" stroke="#444" stroke-width=".8"/><path d="M5.5 5.5 L9 2 M9 2 H6.8 M9 2 V4.2" stroke="#333" stroke-width=".9" fill="none"/></svg><div style="left:205px;top:546px;width:1px;height:12px;background:#777;"></div><svg style="left:211px;top:547.5px" width="11" height="8" viewBox="0 0 11 8"><path d="M0.8 3 L3 0.7 H10.2 L8 3 Z M0.8 3 V7.2 H8 V3 M8 7.2 L10.2 5 V0.7" fill="none" stroke="#444" stroke-width=".8"/></svg><div style="left:213.5px;top:551px;width:5px;height:2.5px;border:.7px solid #555;"></div><svg style="left:227px;top:547.5px" width="11" height="8" viewBox="0 0 11 8"><path d="M0.8 3 L3 0.7 H10.2 L8 3 Z M0.8 3 V7.2 H8 V3 M8 7.2 L10.2 5 V0.7" fill="#fff" stroke="#444" stroke-width=".8"/></svg><div style="left:240.5px;top:543.8px;width:10px;height:16.7px;background:linear-gradient(180deg,#fde7b4,#fbc75a 55%,#fddc94);"></div><svg style="left:241px;top:547.5px" width="11" height="8" viewBox="0 0 11 8"><path d="M0.8 3 L3 0.7 H10.2 L8 3 Z M0.8 3 V7.2 H8 V3 M8 7.2 L10.2 5 V0.7" fill="#8fc6f0" stroke="#2d5fa8" stroke-width=".8"/></svg><div style="left:257px;top:546px;width:1px;height:12px;background:#777;"></div><svg style="left:263px;top:547.5px" width="11" height="8" viewBox="0 0 11 8"><path d="M0.8 3 L3 0.7 H10.2 L8 3 Z M0.8 3 V7.2 H8 V3 M8 7.2 L10.2 5 V0.7" fill="#fff" stroke="#444" stroke-width=".8"/></svg><svg style="left:279px;top:547.5px" width="11" height="8" viewBox="0 0 11 8"><path d="M0.8 3 L3 0.7 H10.2 L8 3 Z M0.8 3 V7.2 H8 V3 M8 7.2 L10.2 5 V0.7" fill="#bfe0f8" stroke="#3d6fb0" stroke-width=".8"/></svg><div style="left:292.3px;top:543.5px;width:89px;height:17px;background:linear-gradient(180deg,#8c8c8c 0%,#a6a6a6 25%,#bcbcbc 100%);"></div><div style="left:292.5px;top:543.8px;width:5.5px;height:16.7px;background:#8a8a8a;"></div><div style="left:294px;top:546px;width:2.5px;height:12px;background:repeating-linear-gradient(180deg,#555 0,#555 1px,#aaa 1px,#aaa 2.5px);"></div><div style="left:299.5px;top:544.3px;width:15px;height:15.7px;background:linear-gradient(180deg,#f9a93c 0%,#fbbd5a 48%,#fde4a2 100%);"></div><svg style="left:300.5px;top:546px" width="13" height="12" viewBox="0 0 13 12"><path d="M2 7 L4.5 3 H10.5 L8 7 Z" fill="#fff" stroke="#555" stroke-width=".6"/></svg><div style="left:320px;top:544.3px;width:15.5px;height:15.7px;background:linear-gradient(180deg,#f9a93c 0%,#fbbd5a 48%,#fde4a2 100%);"></div><svg style="left:321px;top:546px" width="13" height="12" viewBox="0 0 13 12"><path d="M1.5 8 L8 2.5 L11 4 L4.5 9.5 Z" fill="#9acb9a" stroke="#4a7a6a" stroke-width=".6"/><path d="M1.5 8 V9.5 L4.5 11 V9.5" fill="#6aa" stroke="#4a7a6a" stroke-width=".5"/></svg><div style="left:340.6px;top:544.3px;width:14.6px;height:15.7px;background:linear-gradient(180deg,#f9a93c 0%,#fbbd5a 48%,#fde4a2 100%);"></div><svg style="left:341.6px;top:546px" width="13" height="12" viewBox="0 0 13 12"><path d="M4.5 2 H8.5 V10.5 H4.5 Z" fill="#8fbfe8" stroke="#4a78b0" stroke-width=".6"/><path d="M4.5 2 L5.5 1 H9.5 L8.5 2 M9.5 1 V9.5 L8.5 10.5" fill="#b8d8f0" stroke="#4a78b0" stroke-width=".5"/></svg><div style="left:360.6px;top:544.3px;width:15px;height:15.7px;background:linear-gradient(180deg,#f9a93c 0%,#fbbd5a 48%,#fde4a2 100%);"></div><svg style="left:361.6px;top:546px" width="13" height="12" viewBox="0 0 13 12"><path d="M3.5 3 L8.5 4 V10 L3.5 9 Z" fill="#d8dce0" stroke="#888" stroke-width=".6"/><path d="M8.5 4 L10.5 3 V8.5 L8.5 10" fill="#b8bcc4" stroke="#888" stroke-width=".5"/></svg><div style="left:317px;top:545.5px;width:1.2px;height:13px;background:#d6d6d6;"></div><div style="left:337.5px;top:545.5px;width:1.2px;height:13px;background:#d6d6d6;"></div><div style="left:358px;top:545.5px;width:1.2px;height:13px;background:#d6d6d6;"></div><div style="left:378px;top:545.5px;width:1.2px;height:13px;background:#d6d6d6;"></div><div style="left:381px;top:544px;width:28px;height:16px;background:#f1f1f1;"></div><div style="left:381.5px;top:545px;width:27.5px;height:14px;background:#fff;"></div><div class="t" style="left:383.2px;top:547.6px;font-size:7.2px;color:#2a2a2a;width:25.6px;overflow:hidden;">主体轮廓</div><div style="left:3px;top:561.3px;width:406px;height:13.4px;background:linear-gradient(180deg,#949494,#6c6c6c);border-top:1px solid #505050;border-bottom:1.4px solid #3c3c3c;"></div><div class="t" style="left:53.8px;top:564.2px;font-size:6.1px;color:#1c1c1c;">10897.72</div><div class="t" style="left:85.6px;top:564.2px;font-size:6.1px;color:#1c1c1c;">50344.62</div><div class="t" style="left:117.5px;top:564.2px;font-size:6.1px;color:#1c1c1c;">0.00</div><div style="left:179px;top:562.3px;width:16px;height:11.2px;background:#abdcea;border-right:1px solid #666;"></div><div style="left:195px;top:562.3px;width:16px;height:11.2px;background:linear-gradient(180deg,#b6b6b6,#9a9a9a);border-right:1px solid #666;"></div><div style="left:211px;top:562.3px;width:16px;height:11.2px;background:#abdcea;border-right:1px solid #666;"></div><div style="left:227px;top:562.3px;width:15.5px;height:11.2px;background:#abdcea;border-right:1px solid #666;"></div><div style="left:242.5px;top:562.3px;width:15.5px;height:11.2px;background:linear-gradient(180deg,#b6b6b6,#9a9a9a);border-right:1px solid #666;"></div><div style="left:258px;top:562.3px;width:15.699999999999989px;height:11.2px;background:linear-gradient(180deg,#b6b6b6,#9a9a9a);border-right:1px solid #666;"></div><div style="left:273.7px;top:562.3px;width:15.800000000000011px;height:11.2px;background:linear-gradient(180deg,#b6b6b6,#9a9a9a);border-right:1px solid #666;"></div><div style="left:289.5px;top:562.3px;width:15.5px;height:11.2px;background:linear-gradient(180deg,#b6b6b6,#9a9a9a);border-right:1px solid #666;"></div><div style="left:305px;top:562.3px;width:16px;height:11.2px;background:linear-gradient(180deg,#b6b6b6,#9a9a9a);border-right:1px solid #666;"></div><div style="left:321px;top:562.3px;width:16px;height:11.2px;background:linear-gradient(180deg,#b6b6b6,#9a9a9a);border-right:1px solid #666;"></div><svg style="left:181.2px;top:563.2px" width="11" height="10" viewBox="0 0 11 10"><circle cx="5.5" cy="5" r="2.2" fill="none" stroke="#234" stroke-width=".9"/><path d="M1.5 1 L9.5 9 M9.5 1 L1.5 9" stroke="#234" stroke-width=".9"/></svg><svg style="left:197.2px;top:563.2px" width="11" height="10" viewBox="0 0 11 10"><path d="M2 7.5 Q5 7 8.5 2.5" stroke="#2d62b8" stroke-width="1" fill="none"/><circle cx="2.2" cy="7.5" r="1.3" fill="#2d62b8"/><circle cx="8.5" cy="2.8" r="1.3" fill="#2d62b8"/></svg><svg style="left:213.2px;top:563.2px" width="11" height="10" viewBox="0 0 11 10"><circle cx="5.5" cy="5" r="3.8" fill="none" stroke="#234" stroke-width=".9"/><circle cx="5.5" cy="5" r="1.7" fill="#8fc0e8" stroke="#2d62b8" stroke-width=".7"/></svg><svg style="left:229.2px;top:563.2px" width="11" height="10" viewBox="0 0 11 10"><path d="M1.5 7 L9.5 3" stroke="#345" stroke-width="1"/><circle cx="5.5" cy="5" r="1.3" fill="#2d62b8"/></svg><svg style="left:244.7px;top:563.2px" width="11" height="10" viewBox="0 0 11 10"><path d="M1.5 8 Q5 7 9.5 2" stroke="#345" stroke-width="1" fill="none"/><circle cx="4.5" cy="6.8" r="1.3" fill="#2d62b8"/></svg><svg style="left:260.2px;top:563.2px" width="11" height="10" viewBox="0 0 11 10"><path d="M1.5 2 L9.5 8.5 M9 1.5 L2 9" stroke="#333" stroke-width="1"/><circle cx="5.3" cy="5.2" r="1.3" fill="#2d62b8"/></svg><svg style="left:275.9px;top:563.2px" width="11" height="10" viewBox="0 0 11 10"><path d="M5.5 1 V5.5 L1.5 9 M5.5 5.5 L9.5 9" stroke="#333" stroke-width="1" fill="none"/><circle cx="5.5" cy="5.5" r="1.3" fill="#2d62b8"/></svg><svg style="left:291.7px;top:563.2px" width="11" height="10" viewBox="0 0 11 10"><path d="M1 4 H10 M2 3 L4 5 M9 3 L7 5" stroke="#222" stroke-width="1.2" fill="none"/><circle cx="5.5" cy="4" r="1.4" fill="#2d62b8"/></svg><svg style="left:307.2px;top:563.2px" width="11" height="10" viewBox="0 0 11 10"><path d="M1.5 3 H9.5 M1.5 7 H9.5" stroke="#222" stroke-width="1.2"/><circle cx="3.5" cy="3" r="1.5" fill="#2d62b8"/></svg><svg style="left:323.2px;top:563.2px" width="11" height="10" viewBox="0 0 11 10"><circle cx="5.5" cy="5" r="3.8" fill="none" stroke="#c22" stroke-width="1.2"/><path d="M2.8 7.7 L8.2 2.3" stroke="#c22" stroke-width="1.2"/></svg><div style="left:339px;top:562.3px;width:3.5px;height:11.2px;background:#5c5c5c;"></div><div style="left:343.5px;top:562.3px;width:17.5px;height:11.2px;background:linear-gradient(180deg,#b2b2b2,#989898);border-right:1px solid #777;"></div><div style="left:361px;top:562.3px;width:16px;height:11.2px;background:linear-gradient(180deg,#b2b2b2,#989898);border-right:1px solid #777;"></div><div style="left:377px;top:562.3px;width:16px;height:11.2px;background:linear-gradient(180deg,#b2b2b2,#989898);border-right:1px solid #777;"></div><div style="left:393px;top:562.3px;width:16px;height:11.2px;background:linear-gradient(180deg,#b2b2b2,#989898);border-right:1px solid #777;"></div><svg style="left:347px;top:563px" width="11" height="10" viewBox="0 0 11 10"><path d="M1 2 H10 M1 4.5 H10 M1 7 H10 M1 9.5 H10 M1.5 1 V10 M4 1 V10 M6.5 1 V10 M9 1 V10" stroke="#333" stroke-width=".7"/></svg><svg style="left:363.5px;top:563px" width="11" height="10" viewBox="0 0 11 10"><circle cx="5.5" cy="5" r="3" fill="none" stroke="#666" stroke-width=".7"/><path d="M5.5 0.5 V9.5" stroke="#3a9a4a" stroke-width=".9"/><path d="M1 5 H10" stroke="#c33" stroke-width=".9"/></svg><svg style="left:379.5px;top:563px" width="11" height="10" viewBox="0 0 11 10"><path d="M2 1 V8.5 H9.5" stroke="#333" stroke-width="1" fill="none"/><rect x="3" y="5.5" width="2.5" height="2.5" fill="#4a7fd0"/></svg><svg style="left:395px;top:563px" width="11" height="10" viewBox="0 0 11 10"><path d="M1 6 L5.5 3 L10 6 L5.5 9 Z" fill="#9ab" stroke="#567" stroke-width=".6"/><circle cx="5.5" cy="4.5" r="1.6" fill="#7a9" /></svg><div style="left:409px;top:193.5px;width:671px;height:396px;background:#fff;border-left:1.5px solid #b4b8c4;"></div><div style="left:410.5px;top:211px;width:667px;height:15px;background:linear-gradient(180deg,#f4f7f8,#e9f0f2);"></div><div style="left:409px;top:193.8px;width:669px;height:9.2px;background:linear-gradient(180deg,#2a2c38 0%,#41445a 45%,#767b9c 100%);"></div><div style="left:430px;top:195px;width:30px;height:7px;background:radial-gradient(ellipse at center,rgba(120,90,90,.35),rgba(0,0,0,0) 70%);"></div><div style="left:480px;top:195px;width:40px;height:7px;background:radial-gradient(ellipse at center,rgba(90,110,140,.35),rgba(0,0,0,0) 70%);"></div><div style="left:560px;top:195px;width:45px;height:7px;background:radial-gradient(ellipse at center,rgba(110,100,120,.3),rgba(0,0,0,0) 70%);"></div><div style="left:640px;top:195px;width:40px;height:7px;background:radial-gradient(ellipse at center,rgba(140,100,90,.35),rgba(0,0,0,0) 70%);"></div><div style="left:700px;top:195px;width:40px;height:7px;background:radial-gradient(ellipse at center,rgba(120,120,140,.3),rgba(0,0,0,0) 70%);"></div><div style="left:760px;top:195px;width:50px;height:7px;background:radial-gradient(ellipse at center,rgba(90,100,130,.3),rgba(0,0,0,0) 70%);"></div><div style="left:950px;top:195px;width:40px;height:7px;background:radial-gradient(ellipse at center,rgba(140,140,130,.3),rgba(0,0,0,0) 70%);"></div><div style="left:1010px;top:195px;width:40px;height:7px;background:radial-gradient(ellipse at center,rgba(130,140,120,.3),rgba(0,0,0,0) 70%);"></div><div style="left:411.5px;top:196px;width:3.5px;height:5px;background:#dfe8f0;border:.5px solid #7aa;"></div><div style="left:415px;top:195px;width:60px;height:7px;background:rgba(215,220,234,.78);filter:blur(1.5px);border-radius:3px;"></div><div class="t" style="left:417.5px;top:195.3px;font-size:5px;color:#08080c;text-shadow:none;">江苏预制装配率计算结果</div><div style="left:410.5px;top:202.4px;width:667.5px;height:8.6px;background:linear-gradient(180deg,#d6d8ee,#e6e8f6);border-bottom:1px solid #9c9ca4;"></div><div class="t" style="left:411.5px;top:203.1px;font-size:5px;color:#223;text-shadow:none;">导出到Excel(T)</div><div class="t" style="left:450.5px;top:203.1px;font-size:5px;color:#223;text-shadow:none;">退出(E)</div><div style="left:1077.5px;top:193.8px;width:2.5px;height:396px;background:#b4b4b8;"></div><div style="left:1078px;top:555.5px;width:2px;height:20px;background:#3a3a3a;"></div><div style="left:411.5px;top:212.6px;width:80.8px;height:377px;background:#fff;border:1px solid #a8acb4;border-bottom:none;overflow:hidden;"><div style="left:14.5px;top:8.400000000000006px;width:0.8px;height:187px;border-left:.8px dotted #b8bcc4;"></div><div style="left:24.0px;top:26.400000000000006px;width:0.8px;height:30px;border-left:.8px dotted #b8bcc4;"></div><div style="left:24.0px;top:69.4px;width:0.8px;height:38px;border-left:.8px dotted #b8bcc4;"></div><div style="left:24.0px;top:121.4px;width:0.8px;height:30px;border-left:.8px dotted #b8bcc4;"></div><div style="left:24.0px;top:164.4px;width:0.8px;height:21px;border-left:.8px dotted #b8bcc4;"></div><div style="left:10.5px;top:1.700000000000017px;width:7.4px;height:7.4px;border:1.1px solid #2c4c86;background:#fff;"></div><div style="left:2.1999999999999886px;top:3.0999999999999943px;width:4.5px;height:4.5px;border:.8px solid #c8ccd4;background:#fff;"></div><div style="left:3.1999999999999886px;top:4.899999999999994px;width:2.4px;height:0.8px;background:#99a;"></div><div class="t" style="left:20.1px;top:2.0px;font-size:4.9px;color:#222;text-shadow:none;">装配率计算</div><div style="left:20.100000000000023px;top:10.31000000000003px;width:7.6px;height:7.6px;border:1.2px solid #3fb060;background:#fff;"></div><div style="left:22.100000000000023px;top:12.31000000000003px;width:3.6px;height:3.6px;background:#1a3f9a;border-radius:2px;"></div><div class="t" style="left:29.7px;top:10.6px;font-size:4.9px;color:#222;text-shadow:none;">江苏省预制装配率评分</div><div style="left:20.100000000000023px;top:18.920000000000016px;width:7.4px;height:7.4px;border:1.1px solid #2c4c86;background:#fff;"></div><div style="left:11.800000000000011px;top:20.319999999999993px;width:4.5px;height:4.5px;border:.8px solid #c8ccd4;background:#fff;"></div><div style="left:12.800000000000011px;top:22.119999999999994px;width:2.4px;height:0.8px;background:#99a;"></div><div class="t" style="left:29.7px;top:19.2px;font-size:4.9px;color:#222;text-shadow:none;">S1标准化与一体化设计</div><div style="left:29.5px;top:27.53px;width:7.4px;height:7.4px;border:1.1px solid #2c4c86;background:#fff;"></div><div class="t" style="left:39.1px;top:27.8px;font-size:4.9px;color:#222;text-shadow:none;">户型标准化</div><div style="left:29.5px;top:36.140000000000015px;width:7.4px;height:7.4px;border:1.1px solid #2c4c86;background:#fff;"></div><div class="t" style="left:39.1px;top:36.4px;font-size:4.9px;color:#222;text-shadow:none;">构件标准化</div><div style="left:29.5px;top:44.75000000000003px;width:7.4px;height:7.4px;border:1.1px solid #2c4c86;background:#fff;"></div><div class="t" style="left:39.1px;top:45.1px;font-size:4.9px;color:#222;text-shadow:none;">一体化设计</div><div style="left:29.5px;top:53.359999999999985px;width:7.4px;height:7.4px;border:1.1px solid #2c4c86;background:#fff;"></div><div class="t" style="left:39.1px;top:53.7px;font-size:4.9px;color:#222;text-shadow:none;">外墙保温装饰一体</div><div style="left:20.100000000000023px;top:61.97px;width:7.4px;height:7.4px;border:1.1px solid #2c4c86;background:#fff;"></div><div style="left:11.800000000000011px;top:63.369999999999976px;width:4.5px;height:4.5px;border:.8px solid #c8ccd4;background:#fff;"></div><div style="left:12.800000000000011px;top:65.16999999999997px;width:2.4px;height:0.8px;background:#99a;"></div><div class="t" style="left:29.7px;top:62.3px;font-size:4.9px;color:#222;text-shadow:none;">竖向构件</div><div style="left:29.5px;top:70.58000000000001px;width:7.4px;height:7.4px;border:1.1px solid #2c4c86;background:#fff;"></div><div class="t" style="left:39.1px;top:70.9px;font-size:4.9px;color:#222;text-shadow:none;">竖向构件汇总表</div><div style="left:29.5px;top:79.19000000000003px;width:7.4px;height:7.4px;border:1.1px solid #2c4c86;background:#fff;"></div><div class="t" style="left:39.1px;top:79.5px;font-size:4.9px;color:#222;text-shadow:none;">可计入预制体积的</div><div style="left:29.5px;top:87.80000000000004px;width:7.4px;height:7.4px;border:1.1px solid #2c4c86;background:#fff;"></div><div class="t" style="left:39.1px;top:88.1px;font-size:4.9px;color:#222;text-shadow:none;">预制外墙混凝土体</div><div style="left:29.5px;top:96.41px;width:7.4px;height:7.4px;border:1.1px solid #2c4c86;background:#fff;"></div><div class="t" style="left:39.1px;top:96.7px;font-size:4.9px;color:#222;text-shadow:none;">预制内墙混凝土详</div><div style="left:29.5px;top:105.02000000000001px;width:7.4px;height:7.4px;border:1.1px solid #2c4c86;background:#fff;"></div><div class="t" style="left:39.1px;top:105.3px;font-size:4.9px;color:#222;text-shadow:none;">竖向构件混凝土体</div><div style="left:20.100000000000023px;top:113.63000000000002px;width:7.4px;height:7.4px;border:1.1px solid #2c4c86;background:#fff;"></div><div style="left:11.800000000000011px;top:115.03px;width:4.5px;height:4.5px;border:.8px solid #c8ccd4;background:#fff;"></div><div style="left:12.800000000000011px;top:116.83px;width:2.4px;height:0.8px;background:#99a;"></div><div class="t" style="left:29.7px;top:113.9px;font-size:4.9px;color:#222;text-shadow:none;">水平构件</div><div style="left:29.5px;top:122.23999999999998px;width:7.4px;height:7.4px;border:1.1px solid #2c4c86;background:#fff;"></div><div class="t" style="left:39.1px;top:122.5px;font-size:4.9px;color:#222;text-shadow:none;">水平构件汇总表</div><div style="left:29.5px;top:130.85px;width:7.4px;height:7.4px;border:1.1px solid #2c4c86;background:#fff;"></div><div class="t" style="left:39.1px;top:131.2px;font-size:4.9px;color:#222;text-shadow:none;">叠合板投影面积明</div><div style="left:29.5px;top:139.46px;width:7.4px;height:7.4px;border:1.1px solid #2c4c86;background:#fff;"></div><div class="t" style="left:39.1px;top:139.8px;font-size:4.9px;color:#222;text-shadow:none;">预制楼梯投影面积</div><div style="left:29.5px;top:148.07000000000002px;width:7.4px;height:7.4px;border:1.1px solid #2c4c86;background:#fff;"></div><div class="t" style="left:39.1px;top:148.4px;font-size:4.9px;color:#222;text-shadow:none;">水平构件投影面积</div><div style="left:20.100000000000023px;top:156.68000000000004px;width:7.4px;height:7.4px;border:1.1px solid #2c4c86;background:#fff;"></div><div style="left:11.800000000000011px;top:158.08px;width:4.5px;height:4.5px;border:.8px solid #c8ccd4;background:#fff;"></div><div style="left:12.800000000000011px;top:159.88000000000002px;width:2.4px;height:0.8px;background:#99a;"></div><div class="t" style="left:29.7px;top:157.0px;font-size:4.9px;color:#222;text-shadow:none;">围护墙和内隔墙S2</div><div style="left:29.5px;top:165.29px;width:7.4px;height:7.4px;border:1.1px solid #2c4c86;background:#fff;"></div><div class="t" style="left:39.1px;top:165.6px;font-size:4.9px;color:#222;text-shadow:none;">围护墙和内隔墙汇</div><div style="left:29.5px;top:173.9px;width:7.4px;height:7.4px;border:1.1px solid #2c4c86;background:#fff;"></div><div class="t" style="left:39.1px;top:174.2px;font-size:4.9px;color:#222;text-shadow:none;">预制外围护墙体表</div><div style="left:29.5px;top:182.51000000000002px;width:7.4px;height:7.4px;border:1.1px solid #2c4c86;background:#fff;"></div><div class="t" style="left:39.1px;top:182.8px;font-size:4.9px;color:#222;text-shadow:none;">预制内隔墙体表面</div><div style="left:20.100000000000023px;top:191.11999999999998px;width:7.4px;height:7.4px;border:1.1px solid #2c4c86;background:#fff;"></div><div class="t" style="left:29.7px;top:191.4px;font-size:4.9px;color:#222;text-shadow:none;">工业化内装部品S3</div><svg style="left:56.0px;top:28.400000000000006px" width="5" height="8" viewBox="0 0 5 8"><path d="M0.5 0.5 V6.5 L2 5 L3 7.3 L3.8 6.9 L2.8 4.8 H4.6 Z" fill="#fff" stroke="#222" stroke-width=".6"/></svg></div><div class="t" style="left:495px;top:214.8px;font-size:7px;color:#111;font-family:'Liberation Serif','Noto Serif CJK SC',serif;font-weight:900;">江苏预制装配率</div><div style="left:493px;top:225.5px;width:578.5px;height:355.8px;background:#fff;border-left:1.6px solid #8a8e94;border-top:1.3px solid #8a8e94;border-right:1px solid #a0a0a0;border-bottom:1px solid #a8a8a8;"></div><div style="left:494.5px;top:226.6px;width:576px;height:12px;background:#dff0f8;border-bottom:1px solid #cfe0ea;"></div><div class="t" style="left:494.5px;top:227.6px;font-size:7.9px;color:#3a3a3a;font-family:'Liberation Serif','Noto Serif CJK SC',serif;width:576px;text-align:center;letter-spacing:2px;">江苏省预制装配率评分表</div><div class="c" style="left:494.0px;top:238.6px;width:255.3px;height:13.4px;line-height:13.4px;font-size:4.9px;background:#dff0f8;border-color:#c8dce8;">评定项</div><div class="c" style="left:749.3px;top:238.6px;width:164.3px;height:13.4px;line-height:13.4px;font-size:4.9px;background:#dff0f8;border-color:#c8dce8;">评分要求</div><div class="c" style="left:913.6px;top:238.6px;width:33.1px;height:13.4px;line-height:13.4px;font-size:4.9px;background:#dff0f8;border-color:#c8dce8;">评定分</div><div class="c" style="left:946.7px;top:238.6px;width:41.3px;height:13.4px;line-height:13.4px;font-size:4.9px;background:#dff0f8;border-color:#c8dce8;">最低分</div><div class="c" style="left:988.0px;top:238.6px;width:41.5px;height:13.4px;line-height:13.4px;font-size:4.9px;background:#dff0f8;border-color:#c8dce8;">评定得分</div><div class="c" style="left:1029.5px;top:238.6px;width:41.0px;height:13.4px;line-height:13.4px;font-size:4.9px;background:#dff0f8;border-color:#c8dce8;">评定项总分</div><div class="c" style="left:494.0px;top:252.00px;width:102.7px;height:61.62px;line-height:61.62px;font-size:4.9px;">标准化与一体化设计S1(总计10分)</div><div class="c" style="left:494.0px;top:313.62px;width:102.7px;height:20.54px;line-height:20.54px;font-size:4.9px;">预制装配率评定S2(总计100分)</div><div class="c" style="left:494.0px;top:334.16px;width:255.3px;height:10.27px;line-height:10.27px;font-size:4.9px;">绿色建筑评价等级S3(总计2分)</div><div class="c" style="left:494.0px;top:344.43px;width:102.7px;height:112.97px;line-height:112.97px;font-size:4.9px;">集成技术应用S4(总计8分)</div><div class="c" style="left:494.0px;top:457.40px;width:102.7px;height:112.97px;line-height:112.97px;font-size:4.9px;">混凝土项目组织和施工技术S5(总分10分)</div><div class="c" style="left:494.0px;top:570.37px;width:419.6px;height:10.27px;line-height:10.27px;font-size:4.9px;">合计</div><div class="c" style="left:596.7px;top:252.00px;width:49.6px;height:20.54px;line-height:20.54px;font-size:4.9px;">标准化设计</div><div class="c" style="left:596.7px;top:272.54px;width:49.6px;height:41.08px;line-height:41.08px;font-size:4.9px;">一体化设计</div><div class="c" style="left:596.7px;top:313.62px;width:152.6px;height:10.27px;line-height:10.27px;font-size:4.9px;">居住建筑</div><div class="c" style="left:596.7px;top:323.89px;width:152.6px;height:10.27px;line-height:10.27px;font-size:4.9px;">公共建筑</div><div class="c" style="left:596.7px;top:344.43px;width:152.6px;height:10.27px;line-height:10.27px;font-size:4.9px;">节能技术</div><div class="c" style="left:596.7px;top:354.70px;width:152.6px;height:10.27px;line-height:10.27px;font-size:4.9px;">隔震减震技术</div><div class="c" style="left:596.7px;top:364.97px;width:49.6px;height:92.43px;line-height:92.43px;font-size:4.9px;">信息化技术</div><div class="c" style="left:596.7px;top:457.40px;width:152.6px;height:20.54px;line-height:20.54px;font-size:4.9px;">项目组织与管理</div><div class="c" style="left:596.7px;top:477.94px;width:152.6px;height:10.27px;line-height:10.27px;font-size:4.9px;">装配化施工专项方案</div><div class="c" style="left:596.7px;top:488.21px;width:49.6px;height:10.27px;line-height:10.27px;font-size:4.9px;">自动化加工技术</div><div class="c" style="left:646.3px;top:488.21px;width:103.0px;height:10.27px;line-height:10.27px;font-size:4.9px;">混凝土</div><div class="c" style="left:596.7px;top:498.48px;width:152.6px;height:10.27px;line-height:10.27px;font-size:4.9px;">预制构件专设堆场和插放架</div><div class="c" style="left:596.7px;top:508.75px;width:152.6px;height:10.27px;line-height:10.27px;font-size:4.9px;">装配式围墙或道路板</div><div class="c" style="left:596.7px;top:519.02px;width:49.6px;height:30.81px;line-height:30.81px;font-size:4.9px;">施工技术</div><div class="c" style="left:646.3px;top:519.02px;width:103.0px;height:30.81px;line-height:30.81px;font-size:4.9px;">混凝土</div><div class="c" style="left:596.7px;top:549.83px;width:152.6px;height:10.27px;line-height:10.27px;font-size:4.9px;">免抹灰工艺</div><div class="c" style="left:596.7px;top:560.10px;width:152.6px;height:10.27px;line-height:10.27px;font-size:4.9px;">装饰一体化墙板快装技术</div><div class="c" style="left:646.3px;top:252.00px;width:103.0px;height:10.27px;line-height:10.27px;font-size:4.9px;">基本单元(户型)标准化</div><div class="c" style="left:646.3px;top:262.27px;width:103.0px;height:10.27px;line-height:10.27px;font-size:4.9px;">预制构件标准化</div><div class="c" style="left:646.3px;top:272.54px;width:103.0px;height:30.81px;line-height:30.81px;font-size:4.9px;">建筑、结构、机电设备及室内装修一体化设计</div><div class="c" style="left:646.3px;top:303.35px;width:103.0px;height:10.27px;line-height:10.27px;font-size:4.9px;">外墙保温装饰一体化</div><div class="c" style="left:646.3px;top:364.97px;width:103.0px;height:10.27px;line-height:10.27px;font-size:4.9px;">一体化应用</div><div class="c" style="left:646.3px;top:375.24px;width:103.0px;height:30.81px;line-height:30.81px;font-size:4.9px;">设计阶段</div><div class="c" style="left:646.3px;top:406.05px;width:103.0px;height:20.54px;line-height:20.54px;font-size:4.9px;">生产阶段</div><div class="c" style="left:646.3px;top:426.59px;width:103.0px;height:30.81px;line-height:30.81px;font-size:4.9px;">施工阶段</div><div class="c" style="left:749.3px;top:313.62px;width:164.3px;height:20.54px;line-height:20.54px;font-size:4.9px;">Z</div><div class="c" style="left:749.3px;top:252.00px;width:164.3px;height:10.27px;line-height:10.27px;font-size:4.9px;">基本单元(户型)的应用比例不小于70%</div><div class="c" style="left:749.3px;top:262.27px;width:164.3px;height:10.27px;line-height:10.27px;font-size:4.9px;">预制标准化构件应用比例不小于60%</div><div class="c" style="left:749.3px;top:272.54px;width:164.3px;height:10.27px;line-height:10.27px;font-size:4.9px;">具有完整的专项设计策划方案</div><div class="c" style="left:749.3px;top:282.81px;width:164.3px;height:10.27px;line-height:10.27px;font-size:4.9px;">具有完整的室内装修设计</div><div class="c" style="left:749.3px;top:293.08px;width:164.3px;height:10.27px;line-height:10.27px;font-size:4.9px;">具有完整的构件深化设计图</div><div class="c" style="left:749.3px;top:303.35px;width:164.3px;height:10.27px;line-height:10.27px;font-size:4.9px;">外墙保温装饰一体化应用比例不小于50%</div><div class="c" style="left:749.3px;top:334.16px;width:164.3px;height:10.27px;line-height:10.27px;font-size:4.9px;">绿色建筑预评价二星级以上</div><div class="c" style="left:749.3px;top:344.43px;width:164.3px;height:10.27px;line-height:10.27px;font-size:4.9px;">综合节能率不小于75%</div><div class="c" style="left:749.3px;top:354.70px;width:164.3px;height:10.27px;line-height:10.27px;font-size:4.9px;">采用隔震减震技术</div><div class="c" style="left:749.3px;top:364.97px;width:164.3px;height:10.27px;line-height:10.27px;font-size:4.9px;">BIM设计、生产、施工阶段一体化应用</div><div class="c" style="left:749.3px;top:375.24px;width:164.3px;height:10.27px;line-height:10.27px;font-size:4.9px;">完成BIM总体策划</div><div class="c" style="left:749.3px;top:385.51px;width:164.3px;height:10.27px;line-height:10.27px;font-size:4.9px;">BIM模型及管线综合设计</div><div class="c" style="left:749.3px;top:395.78px;width:164.3px;height:10.27px;line-height:10.27px;font-size:4.9px;">BIM构件深化设计</div><div class="c" style="left:749.3px;top:406.05px;width:164.3px;height:10.27px;line-height:10.27px;font-size:4.9px;">完成工厂生产信息化管理系统</div><div class="c" style="left:749.3px;top:416.32px;width:164.3px;height:10.27px;line-height:10.27px;font-size:4.9px;">建立构件生产信息数据库</div><div class="c" style="left:749.3px;top:426.59px;width:164.3px;height:10.27px;line-height:10.27px;font-size:4.9px;">完成施工过程信息化管理系统</div><div class="c" style="left:749.3px;top:436.86px;width:164.3px;height:10.27px;line-height:10.27px;font-size:4.9px;">建立竣工验收信息模型</div><div class="c" style="left:749.3px;top:447.13px;width:164.3px;height:10.27px;line-height:10.27px;font-size:4.9px;">智慧工地</div><div class="c" style="left:749.3px;top:457.40px;width:164.3px;height:10.27px;line-height:10.27px;font-size:4.9px;">采用工程总承包，满足设计、生产、施工、装修等环节的一体化组织实施</div><div class="c" style="left:749.3px;top:467.67px;width:164.3px;height:10.27px;line-height:10.27px;font-size:4.9px;">建立了工程质量管理体系，职责划分明确、清晰</div><div class="c" style="left:749.3px;top:477.94px;width:164.3px;height:10.27px;line-height:10.27px;font-size:4.9px;">具有完整的装配化施工专项方案</div><div class="c" style="left:749.3px;top:488.21px;width:164.3px;height:10.27px;line-height:10.27px;font-size:4.9px;">采用成套自动化钢筋加工设备</div><div class="c" style="left:749.3px;top:498.48px;width:164.3px;height:10.27px;line-height:10.27px;font-size:4.9px;">预制构件专设堆场、插放架</div><div class="c" style="left:749.3px;top:508.75px;width:164.3px;height:10.27px;line-height:10.27px;font-size:4.9px;">采用装配式围墙或道路板</div><div class="c" style="left:749.3px;top:519.02px;width:164.3px;height:10.27px;line-height:10.27px;font-size:4.9px;">采用工具式、定型化模板及支撑</div><div class="c" style="left:749.3px;top:529.29px;width:164.3px;height:10.27px;line-height:10.27px;font-size:4.9px;">组合铝合金模板或铝框木模板技术</div><div class="c" style="left:749.3px;top:539.56px;width:164.3px;height:10.27px;line-height:10.27px;font-size:4.9px;">集成附着式升降脚手架技术</div><div class="c" style="left:749.3px;top:549.83px;width:164.3px;height:10.27px;line-height:10.27px;font-size:4.9px;">采用免抹灰工艺</div><div class="c" style="left:749.3px;top:560.10px;width:164.3px;height:10.27px;line-height:10.27px;font-size:4.9px;">装饰一体化墙板快装技术</div><div class="c" style="left:913.6px;top:252.00px;width:33.1px;height:10.27px;line-height:10.27px;font-size:4.9px;">3</div><div class="c" style="left:913.6px;top:262.27px;width:33.1px;height:10.27px;line-height:10.27px;font-size:4.9px;">3</div><div class="c" style="left:913.6px;top:272.54px;width:33.1px;height:10.27px;line-height:10.27px;font-size:4.9px;">0.5</div><div class="c" style="left:913.6px;top:282.81px;width:33.1px;height:10.27px;line-height:10.27px;font-size:4.9px;">0.5</div><div class="c" style="left:913.6px;top:293.08px;width:33.1px;height:10.27px;line-height:10.27px;font-size:4.9px;">1</div><div class="c" style="left:913.6px;top:303.35px;width:33.1px;height:10.27px;line-height:10.27px;font-size:4.9px;">2</div><div class="c" style="left:913.6px;top:313.62px;width:33.1px;height:10.27px;line-height:10.27px;font-size:4.9px;">50~100</div><div class="c" style="left:913.6px;top:323.89px;width:33.1px;height:10.27px;line-height:10.27px;font-size:4.9px;">45~100</div><div class="c" style="left:913.6px;top:334.16px;width:33.1px;height:10.27px;line-height:10.27px;font-size:4.9px;">2</div><div class="c" style="left:913.6px;top:344.43px;width:33.1px;height:10.27px;line-height:10.27px;font-size:4.9px;">1</div><div class="c" style="left:913.6px;top:354.70px;width:33.1px;height:10.27px;line-height:10.27px;font-size:4.9px;">1</div><div class="c" style="left:913.6px;top:364.97px;width:33.1px;height:10.27px;line-height:10.27px;font-size:4.9px;">1</div><div class="c" style="left:913.6px;top:375.24px;width:33.1px;height:10.27px;line-height:10.27px;font-size:4.9px;">1</div><div class="c" style="left:913.6px;top:385.51px;width:33.1px;height:10.27px;line-height:10.27px;font-size:4.9px;">0.5</div><div class="c" style="left:913.6px;top:395.78px;width:33.1px;height:10.27px;line-height:10.27px;font-size:4.9px;">0.5</div><div class="c" style="left:913.6px;top:406.05px;width:33.1px;height:10.27px;line-height:10.27px;font-size:4.9px;">0.5</div><div class="c" style="left:913.6px;top:416.32px;width:33.1px;height:10.27px;line-height:10.27px;font-size:4.9px;">0.5</div><div class="c" style="left:913.6px;top:426.59px;width:33.1px;height:10.27px;line-height:10.27px;font-size:4.9px;">0.5</div><div class="c" style="left:913.6px;top:436.86px;width:33.1px;height:10.27px;line-height:10.27px;font-size:4.9px;">0.5</div><div class="c" style="left:913.6px;top:447.13px;width:33.1px;height:10.27px;line-height:10.27px;font-size:4.9px;">1</div><div class="c" style="left:913.6px;top:457.40px;width:33.1px;height:10.27px;line-height:10.27px;font-size:4.9px;">1</div><div class="c" style="left:913.6px;top:467.67px;width:33.1px;height:10.27px;line-height:10.27px;font-size:4.9px;">1</div><div class="c" style="left:913.6px;top:477.94px;width:33.1px;height:10.27px;line-height:10.27px;font-size:4.9px;">1</div><div class="c" style="left:913.6px;top:488.21px;width:33.1px;height:10.27px;line-height:10.27px;font-size:4.9px;">1</div><div class="c" style="left:913.6px;top:498.48px;width:33.1px;height:10.27px;line-height:10.27px;font-size:4.9px;">1</div><div class="c" style="left:913.6px;top:508.75px;width:33.1px;height:10.27px;line-height:10.27px;font-size:4.9px;">1</div><div class="c" style="left:913.6px;top:519.02px;width:33.1px;height:10.27px;line-height:10.27px;font-size:4.9px;">1</div><div class="c" style="left:913.6px;top:529.29px;width:33.1px;height:10.27px;line-height:10.27px;font-size:4.9px;">0.5</div><div class="c" style="left:913.6px;top:539.56px;width:33.1px;height:10.27px;line-height:10.27px;font-size:4.9px;">0.5</div><div class="c" style="left:913.6px;top:549.83px;width:33.1px;height:10.27px;line-height:10.27px;font-size:4.9px;">1</div><div class="c" style="left:913.6px;top:560.10px;width:33.1px;height:10.27px;line-height:10.27px;font-size:4.9px;">1</div><div class="c" style="left:913.6px;top:570.37px;width:33.1px;height:10.27px;line-height:10.27px;font-size:4.9px;">130</div><div class="c" style="left:946.7px;top:252.00px;width:41.3px;height:61.62px;line-height:61.62px;font-size:4.9px;">5</div><div class="c" style="left:946.7px;top:313.62px;width:41.3px;height:10.27px;line-height:10.27px;font-size:4.9px;">50</div><div class="c" style="left:946.7px;top:323.89px;width:41.3px;height:10.27px;line-height:10.27px;font-size:4.9px;">45</div><div class="c" style="left:946.7px;top:334.16px;width:41.3px;height:10.27px;line-height:10.27px;font-size:4.9px;">--</div><div class="c" style="left:946.7px;top:344.43px;width:41.3px;height:112.97px;line-height:112.97px;font-size:4.9px;">2</div><div class="c" style="left:946.7px;top:457.40px;width:41.3px;height:112.97px;line-height:112.97px;font-size:4.9px;">4</div><div class="c" style="left:946.7px;top:570.37px;width:41.3px;height:10.27px;line-height:10.27px;font-size:4.9px;">--</div><div class="c" style="left:988.0px;top:272.54px;width:41.5px;height:30.81px;line-height:30.81px;font-size:4.9px;">2.0</div><div class="c" style="left:988.0px;top:252.00px;width:41.5px;height:10.27px;line-height:10.27px;font-size:4.9px;">3.0</div><div class="c" style="left:988.0px;top:262.27px;width:41.5px;height:10.27px;line-height:10.27px;font-size:4.9px;">0.0</div><div class="c" style="left:988.0px;top:303.35px;width:41.5px;height:10.27px;line-height:10.27px;font-size:4.9px;">0.0</div><div class="c" style="left:988.0px;top:313.62px;width:41.5px;height:10.27px;line-height:10.27px;font-size:4.9px;">50.9</div><div class="c" style="left:988.0px;top:323.89px;width:41.5px;height:10.27px;line-height:10.27px;font-size:4.9px;">--</div><div class="c" style="left:988.0px;top:334.16px;width:41.5px;height:10.27px;line-height:10.27px;font-size:4.9px;">2.0</div><div class="c" style="left:988.0px;top:344.43px;width:41.5px;height:10.27px;line-height:10.27px;font-size:4.9px;">1.0</div><div class="c" style="left:988.0px;top:354.70px;width:41.5px;height:10.27px;line-height:10.27px;font-size:4.9px;">1.0</div><div class="c" style="left:988.0px;top:364.97px;width:41.5px;height:10.27px;line-height:10.27px;font-size:4.9px;">1.0</div><div class="c" style="left:988.0px;top:375.24px;width:41.5px;height:10.27px;line-height:10.27px;font-size:4.9px;">0.0</div><div class="c" style="left:988.0px;top:385.51px;width:41.5px;height:10.27px;line-height:10.27px;font-size:4.9px;">0.5</div><div class="c" style="left:988.0px;top:395.78px;width:41.5px;height:10.27px;line-height:10.27px;font-size:4.9px;">0.5</div><div class="c" style="left:988.0px;top:406.05px;width:41.5px;height:10.27px;line-height:10.27px;font-size:4.9px;">0.5</div><div class="c" style="left:988.0px;top:416.32px;width:41.5px;height:10.27px;line-height:10.27px;font-size:4.9px;">0.5</div><div class="c" style="left:988.0px;top:426.59px;width:41.5px;height:10.27px;line-height:10.27px;font-size:4.9px;">0.5</div><div class="c" style="left:988.0px;top:436.86px;width:41.5px;height:10.27px;line-height:10.27px;font-size:4.9px;">0.5</div><div class="c" style="left:988.0px;top:447.13px;width:41.5px;height:10.27px;line-height:10.27px;font-size:4.9px;">1.0</div><div class="c" style="left:988.0px;top:457.40px;width:41.5px;height:10.27px;line-height:10.27px;font-size:4.9px;">1.0</div><div class="c" style="left:988.0px;top:467.67px;width:41.5px;height:10.27px;line-height:10.27px;font-size:4.9px;">1.0</div><div class="c" style="left:988.0px;top:477.94px;width:41.5px;height:10.27px;line-height:10.27px;font-size:4.9px;">1.0</div><div class="c" style="left:988.0px;top:488.21px;width:41.5px;height:10.27px;line-height:10.27px;font-size:4.9px;">0.0</div><div class="c" style="left:988.0px;top:498.48px;width:41.5px;height:10.27px;line-height:10.27px;font-size:4.9px;">1.0</div><div class="c" style="left:988.0px;top:508.75px;width:41.5px;height:10.27px;line-height:10.27px;font-size:4.9px;">1.0</div><div class="c" style="left:988.0px;top:519.02px;width:41.5px;height:10.27px;line-height:10.27px;font-size:4.9px;">0.0</div><div class="c" style="left:988.0px;top:529.29px;width:41.5px;height:10.27px;line-height:10.27px;font-size:4.9px;">0.0</div><div class="c" style="left:988.0px;top:539.56px;width:41.5px;height:10.27px;line-height:10.27px;font-size:4.9px;">0.5</div><div class="c" style="left:988.0px;top:549.83px;width:41.5px;height:10.27px;line-height:10.27px;font-size:4.9px;">1.0</div><div class="c" style="left:988.0px;top:560.10px;width:41.5px;height:10.27px;line-height:10.27px;font-size:4.9px;">1.0</div><div class="c" style="left:988.0px;top:570.37px;width:41.5px;height:10.27px;line-height:10.27px;font-size:4.9px;">--</div><div class="c" style="left:1029.5px;top:252.00px;width:41.0px;height:61.62px;line-height:61.62px;font-size:4.9px;">5.0</div><div class="c" style="left:1029.5px;top:313.62px;width:41.0px;height:20.54px;line-height:20.54px;font-size:4.9px;">50.9</div><div class="c" style="left:1029.5px;top:334.16px;width:41.0px;height:10.27px;line-height:10.27px;font-size:4.9px;">2.0</div><div class="c" style="left:1029.5px;top:344.43px;width:41.0px;height:112.97px;line-height:112.97px;font-size:4.9px;">7.0</div><div class="c" style="left:1029.5px;top:457.40px;width:41.0px;height:112.97px;line-height:112.97px;font-size:4.9px;">7.5</div><div class="c" style="left:1029.5px;top:570.37px;width:41.0px;height:10.27px;line-height:10.27px;font-size:4.9px;border:1.3px solid #1f3f86;line-height:8px;">72.4</div>
</body></html>
